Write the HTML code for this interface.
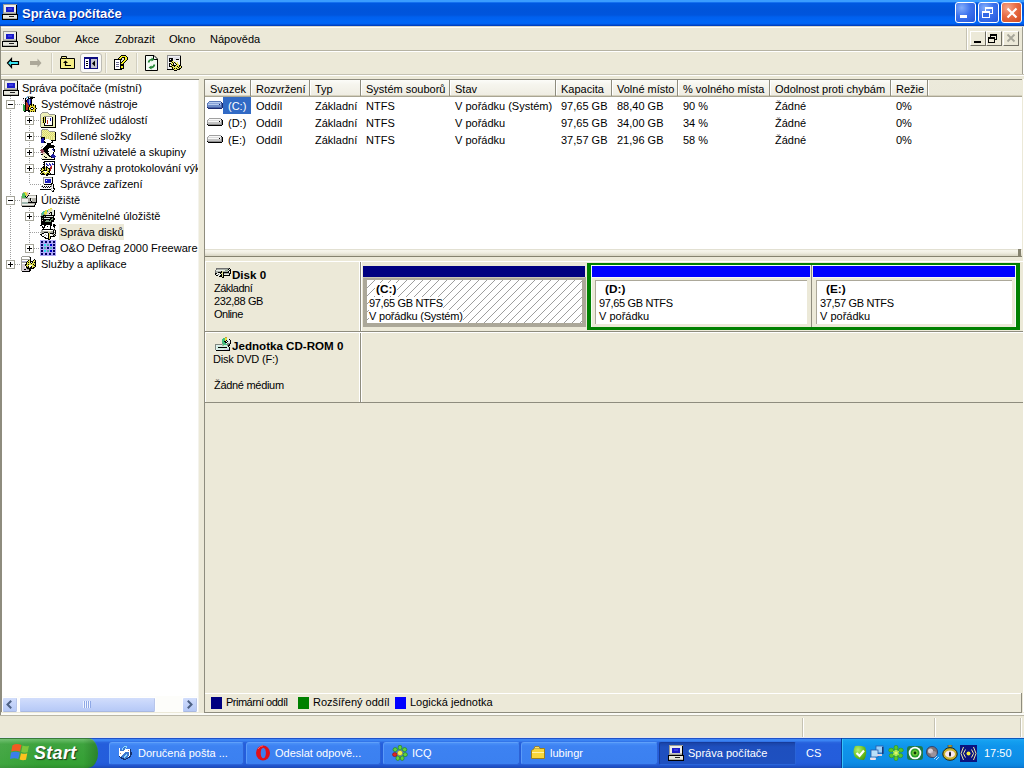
<!DOCTYPE html><html><head><meta charset="utf-8"><style>
*{margin:0;padding:0;box-sizing:border-box}
html,body{width:1024px;height:768px;overflow:hidden;background:#ECE9D8;font-family:"Liberation Sans",sans-serif;font-size:11px;color:#000}
.a{position:absolute}
.t{position:absolute;white-space:nowrap;line-height:13px}
svg{display:block}
</style></head><body>
<div class="a" style="left:0;top:0;width:1024px;height:26px;background:linear-gradient(#3A9CFF 0px,#3A9CFF 1.5px,#1470F0 2.5px,#0058E0 3.5px,#0054DA 9px,#0055DD 15px,#0060EE 17px,#0066F6 22px,#0062F2 24px,#0044C4 25px,#003CB8 26px)"></div>
<div class="a" style="left:2px;top:4px"><svg width="16" height="16" shape-rendering="crispEdges"><rect x="1" y="0" width="14" height="10" fill="#9C9C94"/><rect x="2" y="1" width="12" height="8" fill="#EEEEEA"/><rect x="14" y="1" width="1" height="9" fill="#000"/><rect x="2" y="8" width="12" height="1" fill="#C4C4BC"/><rect x="4" y="3" width="8" height="5" fill="#1C1CC8"/><rect x="6" y="4" width="4" height="2" fill="#3A3AE0"/><rect x="0" y="10" width="16" height="6" fill="#000"/><rect x="1" y="11" width="14" height="4" fill="#E6E6DE"/><rect x="1" y="14" width="14" height="1" fill="#B4B4AC"/><rect x="7" y="12" width="5" height="1" fill="#222"/></svg></div>
<div class="t" style="left:22px;top:6px;color:#fff;font-weight:bold;font-size:13px;line-height:15px;text-shadow:1px 1px 0 #0A1E8C">Správa počítače</div>
<div class="a" style="left:955px;top:2px;width:21px;height:21px;border:1px solid #fff;border-radius:3px;background:radial-gradient(circle at 30% 25%,#85AEFB 0,#3D73EE 45%,#2456DA 100%)"><div class="a" style="left:4px;top:12px;width:7px;height:3px;background:#fff"></div></div>
<div class="a" style="left:978px;top:2px;width:21px;height:21px;border:1px solid #fff;border-radius:3px;background:radial-gradient(circle at 30% 25%,#85AEFB 0,#3D73EE 45%,#2456DA 100%)"><div class="a" style="left:6px;top:4px;width:8px;height:7px;border:1px solid #fff;border-top-width:2px"></div><div class="a" style="left:3px;top:8px;width:8px;height:7px;border:1px solid #fff;border-top-width:2px;background:#3468E6"></div></div>
<div class="a" style="left:1001px;top:2px;width:21px;height:21px;border:1px solid #fff;border-radius:3px;background:radial-gradient(circle at 30% 25%,#F6A58A 0,#E86C44 45%,#D04A1E 100%)"><svg class="a" style="left:4px;top:4px" width="12" height="12"><path d="M1.5 1.5L10.5 10.5M10.5 1.5L1.5 10.5" stroke="#fff" stroke-width="2.2"/></svg></div>
<div class="a" style="left:0;top:26px;width:1024px;height:50px;background:#ECE9D8"></div>
<div class="a" style="left:0;top:26px;width:1024px;height:1px;background:#D8D6C8"></div>
<div class="a" style="left:0;top:27px;width:1024px;height:1px;background:#FDFDF8"></div>
<div class="a" style="left:0;top:50px;width:1024px;height:1px;background:#B6B3A3"></div>
<div class="a" style="left:0;top:51px;width:1024px;height:1px;background:#FFFFFF"></div>
<div class="a" style="left:0;top:26px;width:1px;height:50px;background:#ACA899"></div>
<div class="a" style="left:2px;top:31px"><svg width="16" height="16" shape-rendering="crispEdges"><rect x="1" y="0" width="14" height="10" fill="#9C9C94"/><rect x="2" y="1" width="12" height="8" fill="#EEEEEA"/><rect x="14" y="1" width="1" height="9" fill="#000"/><rect x="2" y="8" width="12" height="1" fill="#C4C4BC"/><rect x="4" y="3" width="8" height="5" fill="#1C1CC8"/><rect x="6" y="4" width="4" height="2" fill="#3A3AE0"/><rect x="0" y="10" width="16" height="6" fill="#000"/><rect x="1" y="11" width="14" height="4" fill="#E6E6DE"/><rect x="1" y="14" width="14" height="1" fill="#B4B4AC"/><rect x="7" y="12" width="5" height="1" fill="#222"/></svg></div>
<div class="t" style="left:25px;top:33px">Soubor</div>
<div class="t" style="left:75px;top:33px">Akce</div>
<div class="t" style="left:115px;top:33px">Zobrazit</div>
<div class="t" style="left:169px;top:33px">Okno</div>
<div class="t" style="left:210px;top:33px">Nápověda</div>
<div class="a" style="left:966px;top:28px;width:1px;height:22px;background:#C5C2B2"></div><div class="a" style="left:967px;top:28px;width:1px;height:22px;background:#fff"></div>
<div class="a" style="left:970px;top:31px;width:16px;height:15px;background:#ECE9D8;border:1px solid;border-color:#fff #716F64 #716F64 #fff"><div class="a" style="left:3px;top:9px;width:7px;height:2px;background:#000"></div></div>
<div class="a" style="left:986px;top:31px;width:16px;height:15px;background:#ECE9D8;border:1px solid;border-color:#fff #716F64 #716F64 #fff"><div class="a" style="left:3px;top:2px;width:7px;height:6px;border:1px solid #000;border-top-width:2px"></div><div class="a" style="left:1px;top:5px;width:7px;height:6px;border:1px solid #000;border-top-width:2px;background:#ECE9D8"></div></div>
<div class="a" style="left:1003px;top:31px;width:16px;height:15px;background:#ECE9D8;border:1px solid;border-color:#fff #716F64 #716F64 #fff"><svg class="a" style="left:2px;top:1px" width="10" height="10"><path d="M1.5 1.5L8.5 8.5M8.5 1.5L1.5 8.5" stroke="#A7A69A" stroke-width="1.8"/></svg></div>
<div class="a" style="left:1022px;top:27px;width:1px;height:49px;background:#A09E90"></div>
<div class="a" style="left:1023px;top:27px;width:1px;height:49px;background:#FFFFFF"></div>
<div class="a" style="left:0;top:74px;width:1024px;height:1px;background:#C5C2B2"></div>
<div class="a" style="left:0;top:75px;width:1024px;height:1px;background:#FFFFFF"></div>
<div class="a" style="left:80px;top:53px;width:22px;height:20px;background:#FAFAF8;border:1px solid #BDBCB4;border-radius:3px"></div>
<svg class="a" style="left:0;top:52px" width="200" height="24" viewBox="0 0 200 24">
<path d="M7.5 11L11.5 6.5V9.5H18.5V12.5H11.5V15.5Z" fill="#3AE4F2" stroke="#000" stroke-width="1.2" stroke-linejoin="miter"/>
<path d="M41.5 11L37.5 6.5V9H30V13H37.5V15.5Z" fill="#ACA899"/>
<g shape-rendering="crispEdges">
<rect x="51" y="1" width="1" height="20" fill="#D2CFC0"/><rect x="52" y="1" width="1" height="20" fill="#F8F8F2"/>
<rect x="105" y="1" width="1" height="20" fill="#D2CFC0"/><rect x="106" y="1" width="1" height="20" fill="#F8F8F2"/>
<rect x="136" y="1" width="1" height="20" fill="#D2CFC0"/><rect x="137" y="1" width="1" height="20" fill="#F8F8F2"/>
</g>
<path d="M60.5 6.5H68.5V16.5H60.5Z" fill="#F6EE86"/>
<path d="M60.5 16.5V6.5H61.5V4.5H66.5V6.5H74.5V16.5Z" fill="#F6EE86" stroke="#000"/>
<path d="M61.5 6.5H66.5" stroke="#000"/>
<path d="M63 11L65.5 8.5L68 11Z" fill="#000"/><path d="M65.5 10V13.5H71" fill="none" stroke="#000" stroke-width="1.2"/>
<g shape-rendering="crispEdges">
<rect x="84" y="5" width="14" height="12" fill="#0C0C80"/>
<rect x="85" y="7" width="4" height="9" fill="#fff"/>
<rect x="91" y="7" width="6" height="9" fill="#C4C4D0"/>
<rect x="86" y="9" width="2" height="1" fill="#000"/><rect x="86" y="11" width="2" height="1" fill="#000"/><rect x="86" y="13" width="2" height="1" fill="#000"/>
</g>
<path d="M95 8.5V14.5L92 11.5Z" fill="#000"/>
<path d="M145.5 3.5H154L157.5 7V18.5H145.5Z" fill="#F4FAF4" stroke="#000"/>
<path d="M153.5 3.5V7.5H157.5" fill="none" stroke="#000"/>
<path d="M148.5 10.5Q149 7.5 152.5 7.5" fill="none" stroke="#2A8A3A" stroke-width="1.6"/><path d="M151.5 5.5L154.5 7.5L151.5 9.5Z" fill="#2A8A3A"/>
<path d="M154.5 12.5Q154 15.5 150.5 15.5" fill="none" stroke="#2A8A3A" stroke-width="1.6"/><path d="M151.5 13.5L148.5 15.5L151.5 17.5Z" fill="#2A8A3A"/>
</svg>
<div class="a" style="left:113px;top:54px"><svg width="16" height="16" shape-rendering="crispEdges"><rect x="8" y="1" width="5" height="1" fill="#000000"/><rect x="7" y="2" width="1" height="1" fill="#000000"/><rect x="8" y="2" width="5" height="1" fill="#F4F020"/><rect x="13" y="2" width="1" height="1" fill="#000000"/><rect x="6" y="3" width="1" height="1" fill="#000000"/><rect x="7" y="3" width="2" height="1" fill="#F4F020"/><rect x="9" y="3" width="3" height="1" fill="#000000"/><rect x="12" y="3" width="2" height="1" fill="#F4F020"/><rect x="14" y="3" width="1" height="1" fill="#000000"/><rect x="5" y="4" width="1" height="1" fill="#000000"/><rect x="6" y="4" width="2" height="1" fill="#F4F020"/><rect x="8" y="4" width="1" height="1" fill="#000000"/><rect x="11" y="4" width="1" height="1" fill="#000000"/><rect x="12" y="4" width="2" height="1" fill="#F4F020"/><rect x="14" y="4" width="1" height="1" fill="#000000"/><rect x="1" y="5" width="8" height="1" fill="#000000"/><rect x="11" y="5" width="1" height="1" fill="#000000"/><rect x="12" y="5" width="2" height="1" fill="#F4F020"/><rect x="14" y="5" width="1" height="1" fill="#000000"/><rect x="1" y="6" width="1" height="1" fill="#000000"/><rect x="2" y="6" width="5" height="1" fill="#FFFFFF"/><rect x="7" y="6" width="1" height="1" fill="#000000"/><rect x="10" y="6" width="1" height="1" fill="#000000"/><rect x="11" y="6" width="2" height="1" fill="#F4F020"/><rect x="13" y="6" width="1" height="1" fill="#000000"/><rect x="1" y="7" width="1" height="1" fill="#000000"/><rect x="2" y="7" width="5" height="1" fill="#FFFFFF"/><rect x="7" y="7" width="1" height="1" fill="#000000"/><rect x="9" y="7" width="1" height="1" fill="#000000"/><rect x="10" y="7" width="2" height="1" fill="#F4F020"/><rect x="12" y="7" width="1" height="1" fill="#000000"/><rect x="1" y="8" width="1" height="1" fill="#000000"/><rect x="2" y="8" width="1" height="1" fill="#FFFFFF"/><rect x="3" y="8" width="3" height="1" fill="#6A6A90"/><rect x="6" y="8" width="1" height="1" fill="#FFFFFF"/><rect x="7" y="8" width="2" height="1" fill="#000000"/><rect x="9" y="8" width="2" height="1" fill="#F4F020"/><rect x="11" y="8" width="1" height="1" fill="#000000"/><rect x="1" y="9" width="1" height="1" fill="#000000"/><rect x="2" y="9" width="5" height="1" fill="#FFFFFF"/><rect x="7" y="9" width="1" height="1" fill="#000000"/><rect x="8" y="9" width="2" height="1" fill="#F4F020"/><rect x="10" y="9" width="1" height="1" fill="#000000"/><rect x="1" y="10" width="1" height="1" fill="#000000"/><rect x="2" y="10" width="1" height="1" fill="#FFFFFF"/><rect x="3" y="10" width="3" height="1" fill="#6A6A90"/><rect x="6" y="10" width="1" height="1" fill="#FFFFFF"/><rect x="7" y="10" width="4" height="1" fill="#000000"/><rect x="1" y="11" width="1" height="1" fill="#000000"/><rect x="2" y="11" width="5" height="1" fill="#FFFFFF"/><rect x="7" y="11" width="4" height="1" fill="#000000"/><rect x="1" y="12" width="1" height="1" fill="#000000"/><rect x="2" y="12" width="1" height="1" fill="#FFFFFF"/><rect x="3" y="12" width="3" height="1" fill="#6A6A90"/><rect x="6" y="12" width="1" height="1" fill="#FFFFFF"/><rect x="7" y="12" width="1" height="1" fill="#000000"/><rect x="8" y="12" width="2" height="1" fill="#F4F020"/><rect x="10" y="12" width="1" height="1" fill="#000000"/><rect x="1" y="13" width="1" height="1" fill="#000000"/><rect x="2" y="13" width="5" height="1" fill="#FFFFFF"/><rect x="7" y="13" width="1" height="1" fill="#000000"/><rect x="8" y="13" width="2" height="1" fill="#F4F020"/><rect x="10" y="13" width="1" height="1" fill="#000000"/><rect x="1" y="14" width="1" height="1" fill="#000000"/><rect x="2" y="14" width="5" height="1" fill="#FFFFFF"/><rect x="7" y="14" width="4" height="1" fill="#000000"/><rect x="1" y="15" width="8" height="1" fill="#000000"/></svg></div>
<div class="a" style="left:166px;top:55px"><svg width="17" height="16" shape-rendering="crispEdges"><rect x="1" y="0" width="14" height="1" fill="#909090"/><rect x="1" y="1" width="1" height="1" fill="#909090"/><rect x="2" y="1" width="12" height="1" fill="#F0F0F4"/><rect x="14" y="1" width="1" height="1" fill="#000000"/><rect x="1" y="2" width="1" height="1" fill="#909090"/><rect x="2" y="2" width="1" height="1" fill="#F0F0F4"/><rect x="3" y="2" width="11" height="1" fill="#E0E0E8"/><rect x="14" y="2" width="1" height="1" fill="#000000"/><rect x="1" y="3" width="1" height="1" fill="#909090"/><rect x="2" y="3" width="1" height="1" fill="#F0F0F4"/><rect x="3" y="3" width="4" height="1" fill="#000000"/><rect x="7" y="3" width="1" height="1" fill="#F0F0F4"/><rect x="8" y="3" width="6" height="1" fill="#E0E0E8"/><rect x="14" y="3" width="1" height="1" fill="#000000"/><rect x="1" y="4" width="1" height="1" fill="#909090"/><rect x="2" y="4" width="1" height="1" fill="#F0F0F4"/><rect x="3" y="4" width="1" height="1" fill="#000000"/><rect x="4" y="4" width="1" height="1" fill="#F0F0F4"/><rect x="5" y="4" width="2" height="1" fill="#000000"/><rect x="7" y="4" width="1" height="1" fill="#F0F0F4"/><rect x="8" y="4" width="2" height="1" fill="#E0E0E8"/><rect x="10" y="4" width="3" height="1" fill="#000000"/><rect x="13" y="4" width="1" height="1" fill="#F0F0F4"/><rect x="14" y="4" width="1" height="1" fill="#000000"/><rect x="1" y="5" width="1" height="1" fill="#909090"/><rect x="2" y="5" width="1" height="1" fill="#F0F0F4"/><rect x="3" y="5" width="4" height="1" fill="#000000"/><rect x="7" y="5" width="7" height="1" fill="#F0F0F4"/><rect x="14" y="5" width="1" height="1" fill="#000000"/><rect x="1" y="6" width="1" height="1" fill="#909090"/><rect x="2" y="6" width="1" height="1" fill="#F0F0F4"/><rect x="3" y="6" width="3" height="1" fill="#000000"/><rect x="6" y="6" width="2" height="1" fill="#E8E860"/><rect x="8" y="6" width="1" height="1" fill="#F0F0F4"/><rect x="9" y="6" width="2" height="1" fill="#E0E0E8"/><rect x="11" y="6" width="3" height="1" fill="#F0F0F4"/><rect x="14" y="6" width="1" height="1" fill="#000000"/><rect x="1" y="7" width="1" height="1" fill="#909090"/><rect x="2" y="7" width="3" height="1" fill="#F0F0F4"/><rect x="5" y="7" width="1" height="1" fill="#E8E860"/><rect x="6" y="7" width="1" height="1" fill="#000000"/><rect x="7" y="7" width="1" height="1" fill="#E8E860"/><rect x="8" y="7" width="1" height="1" fill="#000000"/><rect x="9" y="7" width="1" height="1" fill="#E8E860"/><rect x="10" y="7" width="1" height="1" fill="#F0F0F4"/><rect x="11" y="7" width="1" height="1" fill="#E8E860"/><rect x="12" y="7" width="2" height="1" fill="#F0F0F4"/><rect x="14" y="7" width="1" height="1" fill="#000000"/><rect x="1" y="8" width="1" height="1" fill="#909090"/><rect x="2" y="8" width="1" height="1" fill="#F0F0F4"/><rect x="3" y="8" width="2" height="1" fill="#000000"/><rect x="5" y="8" width="2" height="1" fill="#E8E860"/><rect x="7" y="8" width="1" height="1" fill="#000000"/><rect x="8" y="8" width="1" height="1" fill="#F0F0F4"/><rect x="9" y="8" width="1" height="1" fill="#000000"/><rect x="10" y="8" width="2" height="1" fill="#E8E860"/><rect x="12" y="8" width="2" height="1" fill="#F0F0F4"/><rect x="14" y="8" width="1" height="1" fill="#000000"/><rect x="1" y="9" width="1" height="1" fill="#909090"/><rect x="2" y="9" width="1" height="1" fill="#F0F0F4"/><rect x="3" y="9" width="1" height="1" fill="#000000"/><rect x="4" y="9" width="1" height="1" fill="#F0F0F4"/><rect x="5" y="9" width="1" height="1" fill="#000000"/><rect x="6" y="9" width="1" height="1" fill="#E8E860"/><rect x="7" y="9" width="1" height="1" fill="#000000"/><rect x="8" y="9" width="2" height="1" fill="#F0F0F4"/><rect x="10" y="9" width="1" height="1" fill="#000000"/><rect x="11" y="9" width="2" height="1" fill="#E8E860"/><rect x="13" y="9" width="1" height="1" fill="#F0F0F4"/><rect x="14" y="9" width="1" height="1" fill="#000000"/><rect x="1" y="10" width="1" height="1" fill="#909090"/><rect x="2" y="10" width="1" height="1" fill="#F0F0F4"/><rect x="3" y="10" width="1" height="1" fill="#000000"/><rect x="4" y="10" width="1" height="1" fill="#F0F0F4"/><rect x="5" y="10" width="1" height="1" fill="#E8E860"/><rect x="6" y="10" width="4" height="1" fill="#000000"/><rect x="10" y="10" width="3" height="1" fill="#E8E860"/><rect x="13" y="10" width="2" height="1" fill="#000000"/><rect x="1" y="11" width="1" height="1" fill="#909090"/><rect x="2" y="11" width="1" height="1" fill="#F0F0F4"/><rect x="3" y="11" width="3" height="1" fill="#000000"/><rect x="6" y="11" width="2" height="1" fill="#E8E860"/><rect x="8" y="11" width="1" height="1" fill="#000000"/><rect x="9" y="11" width="2" height="1" fill="#E8E860"/><rect x="11" y="11" width="1" height="1" fill="#000000"/><rect x="12" y="11" width="1" height="1" fill="#E8E860"/><rect x="13" y="11" width="1" height="1" fill="#000000"/><rect x="14" y="11" width="1" height="1" fill="#E8E860"/><rect x="15" y="11" width="1" height="1" fill="#000000"/><rect x="1" y="12" width="1" height="1" fill="#909090"/><rect x="2" y="12" width="3" height="1" fill="#F0F0F4"/><rect x="5" y="12" width="1" height="1" fill="#E8E860"/><rect x="6" y="12" width="1" height="1" fill="#000000"/><rect x="7" y="12" width="5" height="1" fill="#E8E860"/><rect x="12" y="12" width="1" height="1" fill="#000000"/><rect x="13" y="12" width="2" height="1" fill="#E8E860"/><rect x="15" y="12" width="1" height="1" fill="#000000"/><rect x="1" y="13" width="1" height="1" fill="#909090"/><rect x="2" y="13" width="4" height="1" fill="#F0F0F4"/><rect x="6" y="13" width="1" height="1" fill="#000000"/><rect x="7" y="13" width="1" height="1" fill="#E8E860"/><rect x="8" y="13" width="1" height="1" fill="#000000"/><rect x="9" y="13" width="1" height="1" fill="#E8E860"/><rect x="10" y="13" width="1" height="1" fill="#000000"/><rect x="11" y="13" width="2" height="1" fill="#E8E860"/><rect x="13" y="13" width="2" height="1" fill="#000000"/><rect x="1" y="14" width="7" height="1" fill="#000000"/><rect x="8" y="14" width="3" height="1" fill="#E8E860"/><rect x="11" y="14" width="3" height="1" fill="#000000"/><rect x="8" y="15" width="3" height="1" fill="#000000"/></svg></div>
<div class="a" style="left:0;top:76px;width:1024px;height:662px;background:#ECE9D8"></div>
<div class="a" style="left:0;top:26px;width:1px;height:690px;background:#8E8C7E"></div>
<div class="a" style="left:1px;top:79px;width:198px;height:634px;background:#fff;border-left:1px solid #8E8C7E;border-top:1px solid #8E8C7E"></div>
<div class="a" style="left:198px;top:80px;width:1px;height:633px;background:#F4F3EC"></div>
<div class="a" style="left:0;top:0;width:198px;height:696px;overflow:hidden">
<div class="a" style="left:10px;top:96px;width:1px;height:168px;background:repeating-linear-gradient(#A0A0A0 0 1px,transparent 1px 2px)"></div>
<div class="a" style="left:29px;top:112px;width:1px;height:72px;background:repeating-linear-gradient(#A0A0A0 0 1px,transparent 1px 2px)"></div>
<div class="a" style="left:29px;top:208px;width:1px;height:40px;background:repeating-linear-gradient(#A0A0A0 0 1px,transparent 1px 2px)"></div>
<div class="a" style="left:11px;top:104px;width:11px;height:1px;background:repeating-linear-gradient(90deg,#A0A0A0 0 1px,transparent 1px 2px)"></div>
<div class="a" style="left:6px;top:100px;width:9px;height:9px;border:1px solid #A5A59A;background:#fff"><div class="a" style="left:1px;top:3px;width:5px;height:1px;background:#000"></div></div>
<div class="a" style="left:30px;top:120px;width:11px;height:1px;background:repeating-linear-gradient(90deg,#A0A0A0 0 1px,transparent 1px 2px)"></div>
<div class="a" style="left:25px;top:116px;width:9px;height:9px;border:1px solid #A5A59A;background:#fff"><div class="a" style="left:1px;top:3px;width:5px;height:1px;background:#000"></div><div class="a" style="left:3px;top:1px;width:1px;height:5px;background:#000"></div></div>
<div class="a" style="left:30px;top:136px;width:11px;height:1px;background:repeating-linear-gradient(90deg,#A0A0A0 0 1px,transparent 1px 2px)"></div>
<div class="a" style="left:25px;top:132px;width:9px;height:9px;border:1px solid #A5A59A;background:#fff"><div class="a" style="left:1px;top:3px;width:5px;height:1px;background:#000"></div><div class="a" style="left:3px;top:1px;width:1px;height:5px;background:#000"></div></div>
<div class="a" style="left:30px;top:152px;width:11px;height:1px;background:repeating-linear-gradient(90deg,#A0A0A0 0 1px,transparent 1px 2px)"></div>
<div class="a" style="left:25px;top:148px;width:9px;height:9px;border:1px solid #A5A59A;background:#fff"><div class="a" style="left:1px;top:3px;width:5px;height:1px;background:#000"></div><div class="a" style="left:3px;top:1px;width:1px;height:5px;background:#000"></div></div>
<div class="a" style="left:30px;top:168px;width:11px;height:1px;background:repeating-linear-gradient(90deg,#A0A0A0 0 1px,transparent 1px 2px)"></div>
<div class="a" style="left:25px;top:164px;width:9px;height:9px;border:1px solid #A5A59A;background:#fff"><div class="a" style="left:1px;top:3px;width:5px;height:1px;background:#000"></div><div class="a" style="left:3px;top:1px;width:1px;height:5px;background:#000"></div></div>
<div class="a" style="left:30px;top:184px;width:11px;height:1px;background:repeating-linear-gradient(90deg,#A0A0A0 0 1px,transparent 1px 2px)"></div>
<div class="a" style="left:11px;top:200px;width:11px;height:1px;background:repeating-linear-gradient(90deg,#A0A0A0 0 1px,transparent 1px 2px)"></div>
<div class="a" style="left:6px;top:196px;width:9px;height:9px;border:1px solid #A5A59A;background:#fff"><div class="a" style="left:1px;top:3px;width:5px;height:1px;background:#000"></div></div>
<div class="a" style="left:30px;top:216px;width:11px;height:1px;background:repeating-linear-gradient(90deg,#A0A0A0 0 1px,transparent 1px 2px)"></div>
<div class="a" style="left:25px;top:212px;width:9px;height:9px;border:1px solid #A5A59A;background:#fff"><div class="a" style="left:1px;top:3px;width:5px;height:1px;background:#000"></div><div class="a" style="left:3px;top:1px;width:1px;height:5px;background:#000"></div></div>
<div class="a" style="left:30px;top:232px;width:11px;height:1px;background:repeating-linear-gradient(90deg,#A0A0A0 0 1px,transparent 1px 2px)"></div>
<div class="a" style="left:30px;top:248px;width:11px;height:1px;background:repeating-linear-gradient(90deg,#A0A0A0 0 1px,transparent 1px 2px)"></div>
<div class="a" style="left:25px;top:244px;width:9px;height:9px;border:1px solid #A5A59A;background:#fff"><div class="a" style="left:1px;top:3px;width:5px;height:1px;background:#000"></div><div class="a" style="left:3px;top:1px;width:1px;height:5px;background:#000"></div></div>
<div class="a" style="left:11px;top:264px;width:11px;height:1px;background:repeating-linear-gradient(90deg,#A0A0A0 0 1px,transparent 1px 2px)"></div>
<div class="a" style="left:6px;top:260px;width:9px;height:9px;border:1px solid #A5A59A;background:#fff"><div class="a" style="left:1px;top:3px;width:5px;height:1px;background:#000"></div><div class="a" style="left:3px;top:1px;width:1px;height:5px;background:#000"></div></div>
<div class="t" style="left:22px;top:81px;line-height:14px">Správa počítače (místní)</div>
<div class="t" style="left:41px;top:97px;line-height:14px">Systémové nástroje</div>
<div class="t" style="left:60px;top:113px;line-height:14px">Prohlížeč událostí</div>
<div class="t" style="left:60px;top:129px;line-height:14px">Sdílené složky</div>
<div class="t" style="left:60px;top:145px;line-height:14px">Místní uživatelé a skupiny</div>
<div class="t" style="left:60px;top:161px;line-height:14px">Výstrahy a protokolování výkonu</div>
<div class="t" style="left:60px;top:177px;line-height:14px">Správce zařízení</div>
<div class="t" style="left:41px;top:193px;line-height:14px">Úložiště</div>
<div class="t" style="left:60px;top:209px;line-height:14px">Vyměnitelné úložiště</div>
<div class="a" style="left:59px;top:224px;width:65px;height:16px;background:#ECE9D8"></div>
<div class="t" style="left:60px;top:225px;line-height:14px">Správa disků</div>
<div class="t" style="left:60px;top:241px;line-height:14px">O&amp;O Defrag 2000 Freeware</div>
<div class="t" style="left:41px;top:257px;line-height:14px">Služby a aplikace</div>
<div class="a" style="left:3px;top:80px"><svg width="16" height="16" shape-rendering="crispEdges"><rect x="1" y="0" width="14" height="10" fill="#9C9C94"/><rect x="2" y="1" width="12" height="8" fill="#EEEEEA"/><rect x="14" y="1" width="1" height="9" fill="#000"/><rect x="2" y="8" width="12" height="1" fill="#C4C4BC"/><rect x="4" y="3" width="8" height="5" fill="#1C1CC8"/><rect x="6" y="4" width="4" height="2" fill="#3A3AE0"/><rect x="0" y="10" width="16" height="6" fill="#000"/><rect x="1" y="11" width="14" height="4" fill="#E6E6DE"/><rect x="1" y="14" width="14" height="1" fill="#B4B4AC"/><rect x="7" y="12" width="5" height="1" fill="#222"/></svg></div>
<div class="a" style="left:21px;top:96px"><svg width="16" height="16" shape-rendering="crispEdges"><rect x="6" y="0" width="1" height="1" fill="#80B8E0"/><rect x="7" y="0" width="5" height="1" fill="#9C9C94"/><rect x="5" y="1" width="2" height="1" fill="#80B8E0"/><rect x="7" y="1" width="1" height="1" fill="#000000"/><rect x="9" y="1" width="5" height="1" fill="#000000"/><rect x="2" y="2" width="1" height="1" fill="#000000"/><rect x="3" y="2" width="1" height="1" fill="#FFFFFF"/><rect x="4" y="2" width="1" height="1" fill="#000000"/><rect x="5" y="2" width="1" height="1" fill="#80B8E0"/><rect x="6" y="2" width="1" height="1" fill="#FFFFFF"/><rect x="7" y="2" width="5" height="1" fill="#000000"/><rect x="1" y="3" width="1" height="1" fill="#FFFFFF"/><rect x="2" y="3" width="1" height="1" fill="#E8C8D8"/><rect x="3" y="3" width="1" height="1" fill="#FFFFFF"/><rect x="4" y="3" width="1" height="1" fill="#000000"/><rect x="5" y="3" width="1" height="1" fill="#FFFFFF"/><rect x="6" y="3" width="1" height="1" fill="#000000"/><rect x="7" y="3" width="1" height="1" fill="#1A1AB0"/><rect x="8" y="3" width="1" height="1" fill="#80B8E0"/><rect x="9" y="3" width="1" height="1" fill="#1A1AB0"/><rect x="10" y="3" width="1" height="1" fill="#000000"/><rect x="1" y="4" width="1" height="1" fill="#E8C8D8"/><rect x="2" y="4" width="1" height="1" fill="#FFFFFF"/><rect x="3" y="4" width="1" height="1" fill="#E8C8D8"/><rect x="4" y="4" width="2" height="1" fill="#000000"/><rect x="6" y="4" width="2" height="1" fill="#1A1AB0"/><rect x="8" y="4" width="1" height="1" fill="#80B8E0"/><rect x="9" y="4" width="1" height="1" fill="#1A1AB0"/><rect x="10" y="4" width="1" height="1" fill="#000000"/><rect x="2" y="5" width="1" height="1" fill="#FFFFFF"/><rect x="3" y="5" width="1" height="1" fill="#E8C8D8"/><rect x="4" y="5" width="2" height="1" fill="#000000"/><rect x="6" y="5" width="2" height="1" fill="#1A1AB0"/><rect x="8" y="5" width="1" height="1" fill="#80B8E0"/><rect x="9" y="5" width="1" height="1" fill="#1A1AB0"/><rect x="10" y="5" width="1" height="1" fill="#000000"/><rect x="2" y="6" width="1" height="1" fill="#E8C8D8"/><rect x="3" y="6" width="1" height="1" fill="#FFFFFF"/><rect x="4" y="6" width="1" height="1" fill="#000000"/><rect x="5" y="6" width="1" height="1" fill="#B83020"/><rect x="6" y="6" width="2" height="1" fill="#1A1AB0"/><rect x="8" y="6" width="1" height="1" fill="#80B8E0"/><rect x="9" y="6" width="1" height="1" fill="#1A1AB0"/><rect x="10" y="6" width="1" height="1" fill="#000000"/><rect x="2" y="7" width="1" height="1" fill="#FFFFFF"/><rect x="3" y="7" width="1" height="1" fill="#E8C8D8"/><rect x="4" y="7" width="1" height="1" fill="#000000"/><rect x="5" y="7" width="2" height="1" fill="#B83020"/><rect x="7" y="7" width="1" height="1" fill="#1A1AB0"/><rect x="8" y="7" width="1" height="1" fill="#80B8E0"/><rect x="9" y="7" width="1" height="1" fill="#1A1AB0"/><rect x="10" y="7" width="1" height="1" fill="#000000"/><rect x="2" y="8" width="1" height="1" fill="#30A040"/><rect x="3" y="8" width="1" height="1" fill="#FFFFFF"/><rect x="4" y="8" width="1" height="1" fill="#000000"/><rect x="5" y="8" width="2" height="1" fill="#B83020"/><rect x="7" y="8" width="2" height="1" fill="#1A1AB0"/><rect x="9" y="8" width="2" height="1" fill="#000000"/><rect x="11" y="8" width="1" height="1" fill="#E6D83A"/><rect x="12" y="8" width="1" height="1" fill="#000000"/><rect x="2" y="9" width="2" height="1" fill="#30A040"/><rect x="4" y="9" width="1" height="1" fill="#000000"/><rect x="5" y="9" width="3" height="1" fill="#B83020"/><rect x="8" y="9" width="1" height="1" fill="#000000"/><rect x="9" y="9" width="1" height="1" fill="#E6D83A"/><rect x="10" y="9" width="1" height="1" fill="#000000"/><rect x="11" y="9" width="1" height="1" fill="#E6D83A"/><rect x="12" y="9" width="1" height="1" fill="#000000"/><rect x="13" y="9" width="1" height="1" fill="#E6D83A"/><rect x="14" y="9" width="1" height="1" fill="#000000"/><rect x="2" y="10" width="2" height="1" fill="#30A040"/><rect x="4" y="10" width="1" height="1" fill="#000000"/><rect x="5" y="10" width="3" height="1" fill="#B83020"/><rect x="8" y="10" width="1" height="1" fill="#000000"/><rect x="9" y="10" width="5" height="1" fill="#E6D83A"/><rect x="14" y="10" width="1" height="1" fill="#000000"/><rect x="2" y="11" width="2" height="1" fill="#30A040"/><rect x="4" y="11" width="1" height="1" fill="#000000"/><rect x="5" y="11" width="2" height="1" fill="#B83020"/><rect x="7" y="11" width="1" height="1" fill="#000000"/><rect x="8" y="11" width="2" height="1" fill="#E6D83A"/><rect x="10" y="11" width="2" height="1" fill="#000000"/><rect x="12" y="11" width="2" height="1" fill="#E6D83A"/><rect x="14" y="11" width="1" height="1" fill="#000000"/><rect x="2" y="12" width="2" height="1" fill="#30A040"/><rect x="4" y="12" width="1" height="1" fill="#000000"/><rect x="5" y="12" width="2" height="1" fill="#B83020"/><rect x="7" y="12" width="1" height="1" fill="#000000"/><rect x="8" y="12" width="1" height="1" fill="#E6D83A"/><rect x="9" y="12" width="1" height="1" fill="#000000"/><rect x="10" y="12" width="2" height="1" fill="#FFFFFF"/><rect x="12" y="12" width="1" height="1" fill="#000000"/><rect x="13" y="12" width="2" height="1" fill="#E6D83A"/><rect x="15" y="12" width="1" height="1" fill="#000000"/><rect x="2" y="13" width="2" height="1" fill="#30A040"/><rect x="4" y="13" width="1" height="1" fill="#000000"/><rect x="5" y="13" width="2" height="1" fill="#B83020"/><rect x="7" y="13" width="1" height="1" fill="#000000"/><rect x="8" y="13" width="2" height="1" fill="#E6D83A"/><rect x="10" y="13" width="2" height="1" fill="#000000"/><rect x="12" y="13" width="2" height="1" fill="#E6D83A"/><rect x="14" y="13" width="1" height="1" fill="#000000"/><rect x="2" y="14" width="2" height="1" fill="#30A040"/><rect x="4" y="14" width="5" height="1" fill="#000000"/><rect x="9" y="14" width="5" height="1" fill="#E6D83A"/><rect x="14" y="14" width="1" height="1" fill="#000000"/><rect x="3" y="15" width="2" height="1" fill="#000000"/><rect x="7" y="15" width="2" height="1" fill="#000000"/><rect x="9" y="15" width="1" height="1" fill="#E6D83A"/><rect x="10" y="15" width="1" height="1" fill="#000000"/><rect x="11" y="15" width="1" height="1" fill="#E6D83A"/><rect x="12" y="15" width="1" height="1" fill="#000000"/><rect x="13" y="15" width="1" height="1" fill="#E6D83A"/><rect x="14" y="15" width="1" height="1" fill="#000000"/></svg></div>
<div class="a" style="left:40px;top:112px"><svg width="16" height="16" shape-rendering="crispEdges"><rect x="2" y="0" width="6" height="1" fill="#9C9C94"/><rect x="1" y="1" width="1" height="1" fill="#9C9C94"/><rect x="2" y="1" width="6" height="1" fill="#EEF0B8"/><rect x="8" y="1" width="1" height="1" fill="#9C9C94"/><rect x="0" y="2" width="1" height="1" fill="#9C9C94"/><rect x="1" y="2" width="8" height="1" fill="#EEF0B8"/><rect x="9" y="2" width="6" height="1" fill="#9C9C94"/><rect x="0" y="3" width="1" height="1" fill="#9C9C94"/><rect x="1" y="3" width="14" height="1" fill="#EEF0B8"/><rect x="15" y="3" width="1" height="1" fill="#000000"/><rect x="0" y="4" width="1" height="1" fill="#9C9C94"/><rect x="1" y="4" width="3" height="1" fill="#EEF0B8"/><rect x="4" y="4" width="8" height="1" fill="#9C9C94"/><rect x="12" y="4" width="3" height="1" fill="#EEF0B8"/><rect x="15" y="4" width="1" height="1" fill="#000000"/><rect x="0" y="5" width="1" height="1" fill="#9C9C94"/><rect x="1" y="5" width="2" height="1" fill="#EEF0B8"/><rect x="3" y="5" width="1" height="1" fill="#000000"/><rect x="4" y="5" width="1" height="1" fill="#E8E050"/><rect x="5" y="5" width="1" height="1" fill="#000000"/><rect x="6" y="5" width="6" height="1" fill="#FFFFFF"/><rect x="12" y="5" width="1" height="1" fill="#000000"/><rect x="13" y="5" width="2" height="1" fill="#EEF0B8"/><rect x="15" y="5" width="1" height="1" fill="#000000"/><rect x="0" y="6" width="1" height="1" fill="#9C9C94"/><rect x="1" y="6" width="1" height="1" fill="#EEF0B8"/><rect x="2" y="6" width="1" height="1" fill="#E8E050"/><rect x="3" y="6" width="1" height="1" fill="#000000"/><rect x="4" y="6" width="1" height="1" fill="#E8E050"/><rect x="5" y="6" width="1" height="1" fill="#000000"/><rect x="6" y="6" width="1" height="1" fill="#FFFFFF"/><rect x="7" y="6" width="2" height="1" fill="#E8C8D8"/><rect x="9" y="6" width="1" height="1" fill="#FFFFFF"/><rect x="10" y="6" width="1" height="1" fill="#1A1AB0"/><rect x="11" y="6" width="1" height="1" fill="#FFFFFF"/><rect x="12" y="6" width="1" height="1" fill="#000000"/><rect x="13" y="6" width="2" height="1" fill="#EEF0B8"/><rect x="15" y="6" width="1" height="1" fill="#000000"/><rect x="0" y="7" width="1" height="1" fill="#9C9C94"/><rect x="1" y="7" width="2" height="1" fill="#EEF0B8"/><rect x="3" y="7" width="1" height="1" fill="#000000"/><rect x="4" y="7" width="1" height="1" fill="#E8E050"/><rect x="5" y="7" width="1" height="1" fill="#000000"/><rect x="6" y="7" width="4" height="1" fill="#FFFFFF"/><rect x="10" y="7" width="1" height="1" fill="#1A1AB0"/><rect x="11" y="7" width="1" height="1" fill="#FFFFFF"/><rect x="12" y="7" width="1" height="1" fill="#000000"/><rect x="13" y="7" width="2" height="1" fill="#EEF0B8"/><rect x="15" y="7" width="1" height="1" fill="#000000"/><rect x="0" y="8" width="1" height="1" fill="#9C9C94"/><rect x="1" y="8" width="1" height="1" fill="#EEF0B8"/><rect x="2" y="8" width="1" height="1" fill="#E8E050"/><rect x="3" y="8" width="1" height="1" fill="#000000"/><rect x="4" y="8" width="1" height="1" fill="#E8E050"/><rect x="5" y="8" width="1" height="1" fill="#000000"/><rect x="6" y="8" width="1" height="1" fill="#FFFFFF"/><rect x="7" y="8" width="1" height="1" fill="#B83020"/><rect x="8" y="8" width="2" height="1" fill="#FFFFFF"/><rect x="10" y="8" width="1" height="1" fill="#1A1AB0"/><rect x="11" y="8" width="1" height="1" fill="#FFFFFF"/><rect x="12" y="8" width="1" height="1" fill="#000000"/><rect x="13" y="8" width="2" height="1" fill="#EEF0B8"/><rect x="15" y="8" width="1" height="1" fill="#000000"/><rect x="0" y="9" width="1" height="1" fill="#9C9C94"/><rect x="1" y="9" width="2" height="1" fill="#EEF0B8"/><rect x="3" y="9" width="1" height="1" fill="#000000"/><rect x="4" y="9" width="1" height="1" fill="#E8E050"/><rect x="5" y="9" width="1" height="1" fill="#000000"/><rect x="6" y="9" width="1" height="1" fill="#FFFFFF"/><rect x="7" y="9" width="1" height="1" fill="#B83020"/><rect x="8" y="9" width="4" height="1" fill="#FFFFFF"/><rect x="12" y="9" width="1" height="1" fill="#000000"/><rect x="13" y="9" width="2" height="1" fill="#EEF0B8"/><rect x="15" y="9" width="1" height="1" fill="#000000"/><rect x="0" y="10" width="1" height="1" fill="#9C9C94"/><rect x="1" y="10" width="1" height="1" fill="#EEF0B8"/><rect x="2" y="10" width="1" height="1" fill="#E8E050"/><rect x="3" y="10" width="1" height="1" fill="#000000"/><rect x="4" y="10" width="1" height="1" fill="#E8E050"/><rect x="5" y="10" width="1" height="1" fill="#000000"/><rect x="6" y="10" width="1" height="1" fill="#FFFFFF"/><rect x="7" y="10" width="1" height="1" fill="#B83020"/><rect x="8" y="10" width="4" height="1" fill="#FFFFFF"/><rect x="12" y="10" width="1" height="1" fill="#000000"/><rect x="13" y="10" width="2" height="1" fill="#EEF0B8"/><rect x="15" y="10" width="1" height="1" fill="#000000"/><rect x="0" y="11" width="1" height="1" fill="#9C9C94"/><rect x="1" y="11" width="3" height="1" fill="#EEF0B8"/><rect x="4" y="11" width="1" height="1" fill="#000000"/><rect x="5" y="11" width="2" height="1" fill="#FFFFFF"/><rect x="7" y="11" width="1" height="1" fill="#B83020"/><rect x="8" y="11" width="4" height="1" fill="#FFFFFF"/><rect x="12" y="11" width="1" height="1" fill="#000000"/><rect x="13" y="11" width="2" height="1" fill="#EEF0B8"/><rect x="15" y="11" width="1" height="1" fill="#000000"/><rect x="0" y="12" width="1" height="1" fill="#9C9C94"/><rect x="1" y="12" width="3" height="1" fill="#EEF0B8"/><rect x="4" y="12" width="1" height="1" fill="#000000"/><rect x="5" y="12" width="7" height="1" fill="#FFFFFF"/><rect x="12" y="12" width="1" height="1" fill="#000000"/><rect x="13" y="12" width="2" height="1" fill="#EEF0B8"/><rect x="15" y="12" width="1" height="1" fill="#000000"/><rect x="0" y="13" width="1" height="1" fill="#9C9C94"/><rect x="1" y="13" width="3" height="1" fill="#EEF0B8"/><rect x="4" y="13" width="9" height="1" fill="#000000"/><rect x="13" y="13" width="2" height="1" fill="#EEF0B8"/><rect x="15" y="13" width="1" height="1" fill="#000000"/><rect x="0" y="14" width="1" height="1" fill="#9C9C94"/><rect x="1" y="14" width="14" height="1" fill="#EEF0B8"/><rect x="15" y="14" width="1" height="1" fill="#000000"/><rect x="1" y="15" width="15" height="1" fill="#000000"/></svg></div>
<div class="a" style="left:40px;top:128px"><svg width="16" height="16" shape-rendering="crispEdges"><rect x="2" y="1" width="6" height="1" fill="#9C9C94"/><rect x="1" y="2" width="1" height="1" fill="#9C9C94"/><rect x="2" y="2" width="1" height="1" fill="#D8D870"/><rect x="3" y="2" width="1" height="1" fill="#F2F2A0"/><rect x="4" y="2" width="1" height="1" fill="#D8D870"/><rect x="5" y="2" width="1" height="1" fill="#F2F2A0"/><rect x="6" y="2" width="1" height="1" fill="#D8D870"/><rect x="7" y="2" width="1" height="1" fill="#F2F2A0"/><rect x="8" y="2" width="1" height="1" fill="#9C9C94"/><rect x="1" y="3" width="1" height="1" fill="#9C9C94"/><rect x="2" y="3" width="1" height="1" fill="#F2F2A0"/><rect x="3" y="3" width="1" height="1" fill="#D8D870"/><rect x="4" y="3" width="1" height="1" fill="#F2F2A0"/><rect x="5" y="3" width="1" height="1" fill="#D8D870"/><rect x="6" y="3" width="1" height="1" fill="#F2F2A0"/><rect x="7" y="3" width="1" height="1" fill="#D8D870"/><rect x="8" y="3" width="1" height="1" fill="#F2F2A0"/><rect x="9" y="3" width="6" height="1" fill="#9C9C94"/><rect x="1" y="4" width="1" height="1" fill="#9C9C94"/><rect x="2" y="4" width="1" height="1" fill="#D8D870"/><rect x="3" y="4" width="1" height="1" fill="#F2F2A0"/><rect x="4" y="4" width="1" height="1" fill="#D8D870"/><rect x="5" y="4" width="1" height="1" fill="#F2F2A0"/><rect x="6" y="4" width="1" height="1" fill="#D8D870"/><rect x="7" y="4" width="1" height="1" fill="#F2F2A0"/><rect x="8" y="4" width="1" height="1" fill="#D8D870"/><rect x="9" y="4" width="1" height="1" fill="#F2F2A0"/><rect x="10" y="4" width="1" height="1" fill="#D8D870"/><rect x="11" y="4" width="1" height="1" fill="#F2F2A0"/><rect x="12" y="4" width="1" height="1" fill="#D8D870"/><rect x="13" y="4" width="1" height="1" fill="#F2F2A0"/><rect x="14" y="4" width="1" height="1" fill="#D8D870"/><rect x="15" y="4" width="1" height="1" fill="#000000"/><rect x="1" y="5" width="1" height="1" fill="#9C9C94"/><rect x="2" y="5" width="1" height="1" fill="#F2F2A0"/><rect x="3" y="5" width="1" height="1" fill="#D8D870"/><rect x="4" y="5" width="1" height="1" fill="#F2F2A0"/><rect x="5" y="5" width="1" height="1" fill="#D8D870"/><rect x="6" y="5" width="1" height="1" fill="#F2F2A0"/><rect x="7" y="5" width="1" height="1" fill="#D8D870"/><rect x="8" y="5" width="1" height="1" fill="#F2F2A0"/><rect x="9" y="5" width="1" height="1" fill="#D8D870"/><rect x="10" y="5" width="1" height="1" fill="#F2F2A0"/><rect x="11" y="5" width="1" height="1" fill="#D8D870"/><rect x="12" y="5" width="1" height="1" fill="#F2F2A0"/><rect x="13" y="5" width="1" height="1" fill="#D8D870"/><rect x="14" y="5" width="1" height="1" fill="#F2F2A0"/><rect x="15" y="5" width="1" height="1" fill="#000000"/><rect x="1" y="6" width="1" height="1" fill="#9C9C94"/><rect x="2" y="6" width="1" height="1" fill="#D8D870"/><rect x="3" y="6" width="1" height="1" fill="#F2F2A0"/><rect x="4" y="6" width="1" height="1" fill="#D8D870"/><rect x="5" y="6" width="1" height="1" fill="#F2F2A0"/><rect x="6" y="6" width="1" height="1" fill="#D8D870"/><rect x="7" y="6" width="1" height="1" fill="#F2F2A0"/><rect x="8" y="6" width="1" height="1" fill="#D8D870"/><rect x="9" y="6" width="1" height="1" fill="#F2F2A0"/><rect x="10" y="6" width="1" height="1" fill="#D8D870"/><rect x="11" y="6" width="1" height="1" fill="#F2F2A0"/><rect x="12" y="6" width="1" height="1" fill="#D8D870"/><rect x="13" y="6" width="1" height="1" fill="#F2F2A0"/><rect x="14" y="6" width="1" height="1" fill="#D8D870"/><rect x="15" y="6" width="1" height="1" fill="#000000"/><rect x="1" y="7" width="1" height="1" fill="#9C9C94"/><rect x="2" y="7" width="1" height="1" fill="#F2F2A0"/><rect x="3" y="7" width="1" height="1" fill="#D8D870"/><rect x="4" y="7" width="1" height="1" fill="#F2F2A0"/><rect x="5" y="7" width="1" height="1" fill="#D8D870"/><rect x="6" y="7" width="1" height="1" fill="#F2F2A0"/><rect x="7" y="7" width="1" height="1" fill="#D8D870"/><rect x="8" y="7" width="1" height="1" fill="#F2F2A0"/><rect x="9" y="7" width="1" height="1" fill="#D8D870"/><rect x="10" y="7" width="1" height="1" fill="#F2F2A0"/><rect x="11" y="7" width="1" height="1" fill="#D8D870"/><rect x="12" y="7" width="1" height="1" fill="#F2F2A0"/><rect x="13" y="7" width="1" height="1" fill="#D8D870"/><rect x="14" y="7" width="1" height="1" fill="#F2F2A0"/><rect x="15" y="7" width="1" height="1" fill="#000000"/><rect x="1" y="8" width="1" height="1" fill="#9C9C94"/><rect x="2" y="8" width="1" height="1" fill="#D8D870"/><rect x="3" y="8" width="1" height="1" fill="#F2F2A0"/><rect x="4" y="8" width="1" height="1" fill="#D8D870"/><rect x="5" y="8" width="1" height="1" fill="#F2F2A0"/><rect x="6" y="8" width="1" height="1" fill="#D8D870"/><rect x="7" y="8" width="1" height="1" fill="#F2F2A0"/><rect x="8" y="8" width="1" height="1" fill="#D8D870"/><rect x="9" y="8" width="1" height="1" fill="#F2F2A0"/><rect x="10" y="8" width="1" height="1" fill="#D8D870"/><rect x="11" y="8" width="1" height="1" fill="#F2F2A0"/><rect x="12" y="8" width="1" height="1" fill="#D8D870"/><rect x="13" y="8" width="1" height="1" fill="#F2F2A0"/><rect x="14" y="8" width="1" height="1" fill="#D8D870"/><rect x="15" y="8" width="1" height="1" fill="#000000"/><rect x="1" y="9" width="4" height="1" fill="#000000"/><rect x="5" y="9" width="1" height="1" fill="#F2F2A0"/><rect x="6" y="9" width="1" height="1" fill="#D8D870"/><rect x="7" y="9" width="1" height="1" fill="#F2F2A0"/><rect x="8" y="9" width="1" height="1" fill="#D8D870"/><rect x="9" y="9" width="1" height="1" fill="#F2F2A0"/><rect x="10" y="9" width="1" height="1" fill="#D8D870"/><rect x="11" y="9" width="1" height="1" fill="#F2F2A0"/><rect x="12" y="9" width="1" height="1" fill="#D8D870"/><rect x="13" y="9" width="2" height="1" fill="#F2F2A0"/><rect x="15" y="9" width="1" height="1" fill="#000000"/><rect x="1" y="10" width="1" height="1" fill="#000000"/><rect x="2" y="10" width="2" height="1" fill="#1A1AB0"/><rect x="4" y="10" width="1" height="1" fill="#000000"/><rect x="5" y="10" width="1" height="1" fill="#F2F2A0"/><rect x="6" y="10" width="1" height="1" fill="#D8D870"/><rect x="7" y="10" width="1" height="1" fill="#F2F2A0"/><rect x="8" y="10" width="1" height="1" fill="#D8D870"/><rect x="9" y="10" width="1" height="1" fill="#F2F2A0"/><rect x="10" y="10" width="1" height="1" fill="#D8D870"/><rect x="11" y="10" width="1" height="1" fill="#F2F2A0"/><rect x="12" y="10" width="1" height="1" fill="#D8D870"/><rect x="13" y="10" width="2" height="1" fill="#F2F2A0"/><rect x="15" y="10" width="1" height="1" fill="#000000"/><rect x="1" y="11" width="3" height="1" fill="#1A1AB0"/><rect x="4" y="11" width="1" height="1" fill="#000000"/><rect x="5" y="11" width="4" height="1" fill="#FFFFFF"/><rect x="9" y="11" width="1" height="1" fill="#F2F2A0"/><rect x="10" y="11" width="1" height="1" fill="#D8D870"/><rect x="11" y="11" width="1" height="1" fill="#F2F2A0"/><rect x="12" y="11" width="1" height="1" fill="#D8D870"/><rect x="13" y="11" width="2" height="1" fill="#F2F2A0"/><rect x="15" y="11" width="1" height="1" fill="#000000"/><rect x="1" y="12" width="3" height="1" fill="#1A1AB0"/><rect x="4" y="12" width="7" height="1" fill="#FFFFFF"/><rect x="11" y="12" width="5" height="1" fill="#000000"/><rect x="1" y="13" width="3" height="1" fill="#1A1AB0"/><rect x="4" y="13" width="1" height="1" fill="#000000"/><rect x="5" y="13" width="7" height="1" fill="#FFFFFF"/><rect x="12" y="13" width="1" height="1" fill="#000000"/><rect x="1" y="14" width="3" height="1" fill="#1A1AB0"/><rect x="4" y="14" width="2" height="1" fill="#000000"/><rect x="6" y="14" width="5" height="1" fill="#FFFFFF"/><rect x="11" y="14" width="2" height="1" fill="#000000"/><rect x="7" y="15" width="4" height="1" fill="#000000"/></svg></div>
<div class="a" style="left:40px;top:144px"><svg width="16" height="16" shape-rendering="crispEdges"><rect x="7" y="0" width="4" height="1" fill="#000000"/><rect x="6" y="1" width="8" height="1" fill="#000000"/><rect x="2" y="2" width="1" height="1" fill="#9C9C94"/><rect x="3" y="2" width="2" height="1" fill="#FFFFFF"/><rect x="5" y="2" width="10" height="1" fill="#000000"/><rect x="1" y="3" width="1" height="1" fill="#9C9C94"/><rect x="2" y="3" width="2" height="1" fill="#FFFFFF"/><rect x="4" y="3" width="10" height="1" fill="#000000"/><rect x="1" y="4" width="2" height="1" fill="#FFFFFF"/><rect x="3" y="4" width="6" height="1" fill="#000000"/><rect x="9" y="4" width="4" height="1" fill="#FFFFFF"/><rect x="13" y="4" width="1" height="1" fill="#000000"/><rect x="1" y="5" width="2" height="1" fill="#904050"/><rect x="3" y="5" width="5" height="1" fill="#000000"/><rect x="8" y="5" width="4" height="1" fill="#FFFFFF"/><rect x="12" y="5" width="2" height="1" fill="#2020A0"/><rect x="14" y="5" width="1" height="1" fill="#000000"/><rect x="0" y="6" width="4" height="1" fill="#904050"/><rect x="4" y="6" width="4" height="1" fill="#000000"/><rect x="8" y="6" width="5" height="1" fill="#FFFFFF"/><rect x="13" y="6" width="1" height="1" fill="#2020A0"/><rect x="14" y="6" width="1" height="1" fill="#000000"/><rect x="1" y="7" width="3" height="1" fill="#904050"/><rect x="4" y="7" width="5" height="1" fill="#000000"/><rect x="9" y="7" width="5" height="1" fill="#FFFFFF"/><rect x="14" y="7" width="1" height="1" fill="#000000"/><rect x="1" y="8" width="2" height="1" fill="#904050"/><rect x="3" y="8" width="2" height="1" fill="#D8B8A8"/><rect x="5" y="8" width="3" height="1" fill="#000000"/><rect x="8" y="8" width="5" height="1" fill="#FFFFFF"/><rect x="13" y="8" width="1" height="1" fill="#000000"/><rect x="2" y="9" width="3" height="1" fill="#D8B8A8"/><rect x="5" y="9" width="1" height="1" fill="#F0F0C8"/><rect x="6" y="9" width="3" height="1" fill="#000000"/><rect x="9" y="9" width="4" height="1" fill="#FFFFFF"/><rect x="13" y="9" width="1" height="1" fill="#000000"/><rect x="1" y="10" width="2" height="1" fill="#000000"/><rect x="3" y="10" width="4" height="1" fill="#F0F0C8"/><rect x="7" y="10" width="2" height="1" fill="#000000"/><rect x="9" y="10" width="3" height="1" fill="#FFFFFF"/><rect x="12" y="10" width="2" height="1" fill="#2020A0"/><rect x="1" y="11" width="1" height="1" fill="#FFFFFF"/><rect x="2" y="11" width="6" height="1" fill="#F0F0C8"/><rect x="8" y="11" width="2" height="1" fill="#000000"/><rect x="10" y="11" width="1" height="1" fill="#FFFFFF"/><rect x="11" y="11" width="4" height="1" fill="#2020A0"/><rect x="1" y="12" width="1" height="1" fill="#FFFFFF"/><rect x="2" y="12" width="2" height="1" fill="#F0F0C8"/><rect x="4" y="12" width="1" height="1" fill="#000000"/><rect x="5" y="12" width="4" height="1" fill="#F0F0C8"/><rect x="9" y="12" width="2" height="1" fill="#000000"/><rect x="11" y="12" width="5" height="1" fill="#2020A0"/><rect x="1" y="13" width="1" height="1" fill="#FFFFFF"/><rect x="2" y="13" width="3" height="1" fill="#F0F0C8"/><rect x="5" y="13" width="2" height="1" fill="#000000"/><rect x="7" y="13" width="4" height="1" fill="#F0F0C8"/><rect x="11" y="13" width="1" height="1" fill="#000000"/><rect x="12" y="13" width="3" height="1" fill="#2020A0"/><rect x="1" y="14" width="1" height="1" fill="#9C9C94"/><rect x="2" y="14" width="1" height="1" fill="#FFFFFF"/><rect x="3" y="14" width="9" height="1" fill="#F0F0C8"/><rect x="12" y="14" width="2" height="1" fill="#FFFFFF"/><rect x="14" y="14" width="1" height="1" fill="#000000"/><rect x="2" y="15" width="13" height="1" fill="#000000"/></svg></div>
<div class="a" style="left:40px;top:160px"><svg width="16" height="16" shape-rendering="crispEdges"><rect x="4" y="1" width="11" height="1" fill="#000000"/><rect x="3" y="2" width="2" height="1" fill="#000000"/><rect x="5" y="2" width="9" height="1" fill="#FFFFFF"/><rect x="14" y="2" width="1" height="1" fill="#000000"/><rect x="4" y="3" width="1" height="1" fill="#000000"/><rect x="5" y="3" width="1" height="1" fill="#FFFFFF"/><rect x="6" y="3" width="1" height="1" fill="#2A2AB0"/><rect x="7" y="3" width="2" height="1" fill="#FFFFFF"/><rect x="9" y="3" width="1" height="1" fill="#2A2AB0"/><rect x="10" y="3" width="2" height="1" fill="#FFFFFF"/><rect x="12" y="3" width="1" height="1" fill="#2A2AB0"/><rect x="13" y="3" width="1" height="1" fill="#FFFFFF"/><rect x="14" y="3" width="1" height="1" fill="#000000"/><rect x="3" y="4" width="2" height="1" fill="#000000"/><rect x="5" y="4" width="1" height="1" fill="#FFFFFF"/><rect x="6" y="4" width="2" height="1" fill="#2A2AB0"/><rect x="8" y="4" width="1" height="1" fill="#FFFFFF"/><rect x="9" y="4" width="2" height="1" fill="#2A2AB0"/><rect x="11" y="4" width="1" height="1" fill="#FFFFFF"/><rect x="12" y="4" width="2" height="1" fill="#2A2AB0"/><rect x="14" y="4" width="1" height="1" fill="#000000"/><rect x="4" y="5" width="1" height="1" fill="#000000"/><rect x="5" y="5" width="2" height="1" fill="#FFFFFF"/><rect x="7" y="5" width="2" height="1" fill="#2A2AB0"/><rect x="9" y="5" width="1" height="1" fill="#FFFFFF"/><rect x="10" y="5" width="1" height="1" fill="#2A2AB0"/><rect x="11" y="5" width="1" height="1" fill="#E0A0D0"/><rect x="12" y="5" width="2" height="1" fill="#FFFFFF"/><rect x="14" y="5" width="1" height="1" fill="#000000"/><rect x="3" y="6" width="2" height="1" fill="#000000"/><rect x="5" y="6" width="1" height="1" fill="#FFFFFF"/><rect x="6" y="6" width="1" height="1" fill="#000000"/><rect x="7" y="6" width="3" height="1" fill="#FFFFFF"/><rect x="10" y="6" width="1" height="1" fill="#E0A0D0"/><rect x="11" y="6" width="1" height="1" fill="#B02020"/><rect x="12" y="6" width="2" height="1" fill="#FFFFFF"/><rect x="14" y="6" width="1" height="1" fill="#000000"/><rect x="2" y="7" width="3" height="1" fill="#000000"/><rect x="5" y="7" width="1" height="1" fill="#E0E048"/><rect x="6" y="7" width="2" height="1" fill="#000000"/><rect x="8" y="7" width="2" height="1" fill="#FFFFFF"/><rect x="10" y="7" width="2" height="1" fill="#B02020"/><rect x="12" y="7" width="2" height="1" fill="#FFFFFF"/><rect x="14" y="7" width="1" height="1" fill="#000000"/><rect x="1" y="8" width="1" height="1" fill="#000000"/><rect x="2" y="8" width="1" height="1" fill="#E0E048"/><rect x="3" y="8" width="2" height="1" fill="#000000"/><rect x="5" y="8" width="1" height="1" fill="#E0E048"/><rect x="6" y="8" width="1" height="1" fill="#000000"/><rect x="7" y="8" width="1" height="1" fill="#E0E048"/><rect x="8" y="8" width="2" height="1" fill="#000000"/><rect x="10" y="8" width="2" height="1" fill="#B02020"/><rect x="12" y="8" width="2" height="1" fill="#FFFFFF"/><rect x="14" y="8" width="1" height="1" fill="#000000"/><rect x="1" y="9" width="1" height="1" fill="#000000"/><rect x="2" y="9" width="2" height="1" fill="#E0E048"/><rect x="4" y="9" width="1" height="1" fill="#000000"/><rect x="5" y="9" width="1" height="1" fill="#E0E048"/><rect x="6" y="9" width="1" height="1" fill="#000000"/><rect x="7" y="9" width="2" height="1" fill="#E0E048"/><rect x="9" y="9" width="1" height="1" fill="#000000"/><rect x="10" y="9" width="1" height="1" fill="#B02020"/><rect x="11" y="9" width="3" height="1" fill="#FFFFFF"/><rect x="14" y="9" width="1" height="1" fill="#000000"/><rect x="0" y="10" width="1" height="1" fill="#000000"/><rect x="1" y="10" width="2" height="1" fill="#E0E048"/><rect x="3" y="10" width="4" height="1" fill="#000000"/><rect x="7" y="10" width="2" height="1" fill="#E0E048"/><rect x="9" y="10" width="1" height="1" fill="#000000"/><rect x="10" y="10" width="1" height="1" fill="#B02020"/><rect x="11" y="10" width="3" height="1" fill="#FFFFFF"/><rect x="14" y="10" width="1" height="1" fill="#000000"/><rect x="1" y="11" width="2" height="1" fill="#000000"/><rect x="3" y="11" width="1" height="1" fill="#E0E048"/><rect x="4" y="11" width="3" height="1" fill="#FFFFFF"/><rect x="7" y="11" width="1" height="1" fill="#E0E048"/><rect x="8" y="11" width="2" height="1" fill="#000000"/><rect x="10" y="11" width="4" height="1" fill="#FFFFFF"/><rect x="14" y="11" width="1" height="1" fill="#000000"/><rect x="1" y="12" width="1" height="1" fill="#000000"/><rect x="2" y="12" width="3" height="1" fill="#E0E048"/><rect x="5" y="12" width="1" height="1" fill="#FFFFFF"/><rect x="6" y="12" width="3" height="1" fill="#E0E048"/><rect x="9" y="12" width="1" height="1" fill="#000000"/><rect x="10" y="12" width="4" height="1" fill="#FFFFFF"/><rect x="14" y="12" width="1" height="1" fill="#000000"/><rect x="0" y="13" width="1" height="1" fill="#000000"/><rect x="1" y="13" width="1" height="1" fill="#E0E048"/><rect x="2" y="13" width="2" height="1" fill="#000000"/><rect x="4" y="13" width="3" height="1" fill="#E0E048"/><rect x="7" y="13" width="2" height="1" fill="#000000"/><rect x="9" y="13" width="1" height="1" fill="#E0E048"/><rect x="10" y="13" width="1" height="1" fill="#000000"/><rect x="11" y="13" width="3" height="1" fill="#FFFFFF"/><rect x="14" y="13" width="1" height="1" fill="#000000"/><rect x="1" y="14" width="4" height="1" fill="#000000"/><rect x="5" y="14" width="1" height="1" fill="#E0E048"/><rect x="6" y="14" width="9" height="1" fill="#000000"/><rect x="6" y="15" width="2" height="1" fill="#000000"/></svg></div>
<div class="a" style="left:40px;top:176px"><svg width="16" height="16" shape-rendering="crispEdges"><rect x="3" y="1" width="9" height="1" fill="#9C9C94"/><rect x="12" y="1" width="1" height="1" fill="#000000"/><rect x="3" y="2" width="1" height="1" fill="#9C9C94"/><rect x="4" y="2" width="8" height="1" fill="#F4F4F8"/><rect x="12" y="2" width="1" height="1" fill="#000000"/><rect x="3" y="3" width="1" height="1" fill="#9C9C94"/><rect x="4" y="3" width="1" height="1" fill="#F4F4F8"/><rect x="5" y="3" width="6" height="1" fill="#1C1CC0"/><rect x="11" y="3" width="1" height="1" fill="#F4F4F8"/><rect x="12" y="3" width="1" height="1" fill="#000000"/><rect x="3" y="4" width="1" height="1" fill="#9C9C94"/><rect x="4" y="4" width="1" height="1" fill="#F4F4F8"/><rect x="5" y="4" width="1" height="1" fill="#1C1CC0"/><rect x="6" y="4" width="1" height="1" fill="#F4F4F8"/><rect x="7" y="4" width="4" height="1" fill="#1C1CC0"/><rect x="11" y="4" width="1" height="1" fill="#F4F4F8"/><rect x="12" y="4" width="1" height="1" fill="#000000"/><rect x="3" y="5" width="1" height="1" fill="#9C9C94"/><rect x="4" y="5" width="1" height="1" fill="#F4F4F8"/><rect x="5" y="5" width="6" height="1" fill="#1C1CC0"/><rect x="11" y="5" width="1" height="1" fill="#F4F4F8"/><rect x="12" y="5" width="1" height="1" fill="#000000"/><rect x="3" y="6" width="1" height="1" fill="#9C9C94"/><rect x="4" y="6" width="1" height="1" fill="#F4F4F8"/><rect x="5" y="6" width="6" height="1" fill="#1C1CC0"/><rect x="11" y="6" width="1" height="1" fill="#F4F4F8"/><rect x="12" y="6" width="1" height="1" fill="#000000"/><rect x="3" y="7" width="1" height="1" fill="#9C9C94"/><rect x="4" y="7" width="7" height="1" fill="#F4F4F8"/><rect x="11" y="7" width="2" height="1" fill="#000000"/><rect x="4" y="8" width="8" height="1" fill="#000000"/><rect x="12" y="8" width="1" height="1" fill="#F4F4F8"/><rect x="13" y="8" width="1" height="1" fill="#000000"/><rect x="2" y="9" width="1" height="1" fill="#9C9C94"/><rect x="3" y="9" width="8" height="1" fill="#F4F4F8"/><rect x="11" y="9" width="1" height="1" fill="#9C9C94"/><rect x="12" y="9" width="1" height="1" fill="#F4F4F8"/><rect x="13" y="9" width="1" height="1" fill="#000000"/><rect x="1" y="10" width="1" height="1" fill="#9C9C94"/><rect x="2" y="10" width="1" height="1" fill="#000000"/><rect x="3" y="10" width="1" height="1" fill="#F4F4F8"/><rect x="4" y="10" width="1" height="1" fill="#000000"/><rect x="5" y="10" width="1" height="1" fill="#F4F4F8"/><rect x="6" y="10" width="1" height="1" fill="#000000"/><rect x="7" y="10" width="1" height="1" fill="#F4F4F8"/><rect x="8" y="10" width="1" height="1" fill="#000000"/><rect x="9" y="10" width="1" height="1" fill="#F4F4F8"/><rect x="10" y="10" width="1" height="1" fill="#000000"/><rect x="11" y="10" width="1" height="1" fill="#9C9C94"/><rect x="12" y="10" width="1" height="1" fill="#F4F4F8"/><rect x="13" y="10" width="1" height="1" fill="#000000"/><rect x="1" y="11" width="2" height="1" fill="#F4F4F8"/><rect x="3" y="11" width="1" height="1" fill="#000000"/><rect x="4" y="11" width="1" height="1" fill="#F4F4F8"/><rect x="5" y="11" width="1" height="1" fill="#000000"/><rect x="6" y="11" width="1" height="1" fill="#F4F4F8"/><rect x="7" y="11" width="1" height="1" fill="#000000"/><rect x="8" y="11" width="1" height="1" fill="#F4F4F8"/><rect x="9" y="11" width="1" height="1" fill="#000000"/><rect x="10" y="11" width="3" height="1" fill="#F4F4F8"/><rect x="13" y="11" width="1" height="1" fill="#000000"/><rect x="0" y="12" width="11" height="1" fill="#F4F4F8"/><rect x="11" y="12" width="1" height="1" fill="#9C9C94"/><rect x="12" y="12" width="1" height="1" fill="#F4F4F8"/><rect x="13" y="12" width="2" height="1" fill="#000000"/><rect x="0" y="13" width="11" height="1" fill="#000000"/><rect x="11" y="13" width="3" height="1" fill="#F4F4F8"/><rect x="14" y="13" width="1" height="1" fill="#000000"/><rect x="11" y="14" width="1" height="1" fill="#9C9C94"/><rect x="12" y="14" width="1" height="1" fill="#F4F4F8"/><rect x="13" y="14" width="1" height="1" fill="#000000"/><rect x="12" y="15" width="2" height="1" fill="#000000"/></svg></div>
<div class="a" style="left:21px;top:192px"><svg width="16" height="16" shape-rendering="crispEdges"><rect x="2" y="0" width="1" height="1" fill="#B0B0A8"/><rect x="3" y="0" width="2" height="1" fill="#E6D83A"/><rect x="5" y="0" width="1" height="1" fill="#EEEEB0"/><rect x="6" y="0" width="1" height="1" fill="#E0C0B0"/><rect x="1" y="1" width="1" height="1" fill="#A0B8B0"/><rect x="2" y="1" width="2" height="1" fill="#50C060"/><rect x="4" y="1" width="2" height="1" fill="#E6D83A"/><rect x="6" y="1" width="2" height="1" fill="#E0C0B0"/><rect x="8" y="1" width="1" height="1" fill="#000000"/><rect x="1" y="2" width="3" height="1" fill="#50C060"/><rect x="4" y="2" width="2" height="1" fill="#E6D83A"/><rect x="6" y="2" width="2" height="1" fill="#E0C0B0"/><rect x="1" y="3" width="4" height="1" fill="#50C060"/><rect x="5" y="3" width="1" height="1" fill="#E6D83A"/><rect x="6" y="3" width="1" height="1" fill="#E0C0B0"/><rect x="7" y="3" width="1" height="1" fill="#000000"/><rect x="8" y="3" width="7" height="1" fill="#B0B0A8"/><rect x="15" y="3" width="1" height="1" fill="#000000"/><rect x="0" y="4" width="1" height="1" fill="#B0B0A8"/><rect x="1" y="4" width="3" height="1" fill="#50C060"/><rect x="4" y="4" width="1" height="1" fill="#000000"/><rect x="5" y="4" width="1" height="1" fill="#F0F0EC"/><rect x="6" y="4" width="1" height="1" fill="#000000"/><rect x="7" y="4" width="8" height="1" fill="#F0F0EC"/><rect x="15" y="4" width="1" height="1" fill="#000000"/><rect x="0" y="5" width="1" height="1" fill="#B0B0A8"/><rect x="1" y="5" width="4" height="1" fill="#50C060"/><rect x="5" y="5" width="1" height="1" fill="#000000"/><rect x="6" y="5" width="1" height="1" fill="#B0B0A8"/><rect x="7" y="5" width="8" height="1" fill="#F0F0EC"/><rect x="15" y="5" width="1" height="1" fill="#000000"/><rect x="0" y="6" width="9" height="1" fill="#B0B0A8"/><rect x="9" y="6" width="1" height="1" fill="#000000"/><rect x="10" y="6" width="5" height="1" fill="#B0B0A8"/><rect x="15" y="6" width="1" height="1" fill="#000000"/><rect x="0" y="7" width="1" height="1" fill="#B0B0A8"/><rect x="1" y="7" width="6" height="1" fill="#F0F0EC"/><rect x="7" y="7" width="2" height="1" fill="#B0B0A8"/><rect x="9" y="7" width="1" height="1" fill="#000000"/><rect x="10" y="7" width="1" height="1" fill="#F0F0EC"/><rect x="11" y="7" width="4" height="1" fill="#B0B0A8"/><rect x="15" y="7" width="1" height="1" fill="#000000"/><rect x="0" y="8" width="1" height="1" fill="#B0B0A8"/><rect x="1" y="8" width="6" height="1" fill="#F0F0EC"/><rect x="7" y="8" width="2" height="1" fill="#B0B0A8"/><rect x="9" y="8" width="1" height="1" fill="#000000"/><rect x="10" y="8" width="1" height="1" fill="#F0F0EC"/><rect x="11" y="8" width="4" height="1" fill="#B0B0A8"/><rect x="15" y="8" width="1" height="1" fill="#000000"/><rect x="0" y="9" width="1" height="1" fill="#B0B0A8"/><rect x="1" y="9" width="6" height="1" fill="#F0F0EC"/><rect x="7" y="9" width="3" height="1" fill="#B0B0A8"/><rect x="10" y="9" width="1" height="1" fill="#000000"/><rect x="11" y="9" width="4" height="1" fill="#B0B0A8"/><rect x="15" y="9" width="1" height="1" fill="#000000"/><rect x="0" y="10" width="1" height="1" fill="#B0B0A8"/><rect x="1" y="10" width="6" height="1" fill="#A0B8B0"/><rect x="7" y="10" width="9" height="1" fill="#000000"/><rect x="0" y="11" width="1" height="1" fill="#B0B0A8"/><rect x="1" y="11" width="6" height="1" fill="#A0B8B0"/><rect x="7" y="11" width="7" height="1" fill="#B0B0A8"/><rect x="14" y="11" width="1" height="1" fill="#000000"/><rect x="0" y="12" width="1" height="1" fill="#B0B0A8"/><rect x="1" y="12" width="12" height="1" fill="#F0F0EC"/><rect x="13" y="12" width="1" height="1" fill="#B0B0A8"/><rect x="14" y="12" width="1" height="1" fill="#000000"/><rect x="0" y="13" width="13" height="1" fill="#B0B0A8"/><rect x="13" y="13" width="1" height="1" fill="#000000"/><rect x="1" y="14" width="13" height="1" fill="#000000"/></svg></div>
<div class="a" style="left:40px;top:208px"><svg width="16" height="16" shape-rendering="crispEdges"><rect x="10" y="0" width="2" height="1" fill="#E0E040"/><rect x="8" y="1" width="2" height="1" fill="#E0E040"/><rect x="10" y="1" width="2" height="1" fill="#E0E0A0"/><rect x="12" y="1" width="1" height="1" fill="#E0E8E0"/><rect x="5" y="2" width="2" height="1" fill="#E0E040"/><rect x="7" y="2" width="1" height="1" fill="#40C0A0"/><rect x="8" y="2" width="4" height="1" fill="#E0E0A0"/><rect x="12" y="2" width="2" height="1" fill="#E0E8E0"/><rect x="14" y="2" width="1" height="1" fill="#000000"/><rect x="3" y="3" width="2" height="1" fill="#40C0A0"/><rect x="5" y="3" width="2" height="1" fill="#E0E040"/><rect x="7" y="3" width="1" height="1" fill="#40C0A0"/><rect x="8" y="3" width="1" height="1" fill="#E0D0D8"/><rect x="9" y="3" width="2" height="1" fill="#E0E0A0"/><rect x="11" y="3" width="3" height="1" fill="#E0E8E0"/><rect x="14" y="3" width="1" height="1" fill="#000000"/><rect x="2" y="4" width="2" height="1" fill="#40C0A0"/><rect x="4" y="4" width="3" height="1" fill="#E0E040"/><rect x="7" y="4" width="2" height="1" fill="#E0D0D8"/><rect x="9" y="4" width="1" height="1" fill="#E0E8E0"/><rect x="10" y="4" width="2" height="1" fill="#000000"/><rect x="12" y="4" width="2" height="1" fill="#E0E8E0"/><rect x="14" y="4" width="1" height="1" fill="#000000"/><rect x="1" y="5" width="1" height="1" fill="#80A080"/><rect x="2" y="5" width="2" height="1" fill="#40C0A0"/><rect x="4" y="5" width="3" height="1" fill="#E0E040"/><rect x="7" y="5" width="2" height="1" fill="#E0D0D8"/><rect x="9" y="5" width="1" height="1" fill="#000000"/><rect x="10" y="5" width="1" height="1" fill="#E0E8E0"/><rect x="11" y="5" width="1" height="1" fill="#000000"/><rect x="12" y="5" width="2" height="1" fill="#E0E8E0"/><rect x="14" y="5" width="1" height="1" fill="#000000"/><rect x="1" y="6" width="1" height="1" fill="#80A080"/><rect x="2" y="6" width="1" height="1" fill="#40C0A0"/><rect x="3" y="6" width="2" height="1" fill="#80A080"/><rect x="5" y="6" width="1" height="1" fill="#E0E040"/><rect x="6" y="6" width="1" height="1" fill="#E0D0D8"/><rect x="7" y="6" width="4" height="1" fill="#E0E8E0"/><rect x="11" y="6" width="1" height="1" fill="#000000"/><rect x="12" y="6" width="2" height="1" fill="#E0E8E0"/><rect x="14" y="6" width="1" height="1" fill="#000000"/><rect x="1" y="7" width="2" height="1" fill="#80A080"/><rect x="3" y="7" width="12" height="1" fill="#000000"/><rect x="1" y="8" width="3" height="1" fill="#000000"/><rect x="4" y="8" width="1" height="1" fill="#80A080"/><rect x="5" y="8" width="1" height="1" fill="#000000"/><rect x="6" y="8" width="7" height="1" fill="#E0E8E0"/><rect x="13" y="8" width="1" height="1" fill="#000000"/><rect x="1" y="9" width="13" height="1" fill="#000000"/><rect x="1" y="10" width="1" height="1" fill="#000000"/><rect x="2" y="10" width="1" height="1" fill="#80A080"/><rect x="3" y="10" width="1" height="1" fill="#000000"/><rect x="4" y="10" width="6" height="1" fill="#E0E8E0"/><rect x="10" y="10" width="2" height="1" fill="#000000"/><rect x="12" y="10" width="1" height="1" fill="#80A080"/><rect x="13" y="10" width="2" height="1" fill="#000000"/><rect x="1" y="11" width="10" height="1" fill="#000000"/><rect x="11" y="11" width="2" height="1" fill="#80A080"/><rect x="13" y="11" width="2" height="1" fill="#000000"/><rect x="1" y="12" width="1" height="1" fill="#000000"/><rect x="2" y="12" width="1" height="1" fill="#E0D0D8"/><rect x="3" y="12" width="3" height="1" fill="#000000"/><rect x="6" y="12" width="3" height="1" fill="#80A080"/><rect x="9" y="12" width="1" height="1" fill="#000000"/><rect x="10" y="12" width="1" height="1" fill="#80A080"/><rect x="11" y="12" width="3" height="1" fill="#000000"/><rect x="1" y="13" width="4" height="1" fill="#000000"/><rect x="5" y="13" width="6" height="1" fill="#80A080"/><rect x="11" y="13" width="3" height="1" fill="#000000"/><rect x="1" y="14" width="11" height="1" fill="#000000"/><rect x="1" y="15" width="11" height="1" fill="#000000"/></svg></div>
<div class="a" style="left:40px;top:224px"><svg width="16" height="16" shape-rendering="crispEdges"><rect x="1" y="0" width="11" height="1" fill="#000000"/><rect x="13" y="0" width="2" height="1" fill="#000000"/><rect x="0" y="1" width="2" height="1" fill="#000000"/><rect x="2" y="1" width="2" height="1" fill="#FFFFFF"/><rect x="4" y="1" width="2" height="1" fill="#000000"/><rect x="6" y="1" width="4" height="1" fill="#FFFFFF"/><rect x="10" y="1" width="2" height="1" fill="#000000"/><rect x="13" y="1" width="3" height="1" fill="#000000"/><rect x="2" y="2" width="1" height="1" fill="#000000"/><rect x="3" y="2" width="1" height="1" fill="#FFFFFF"/><rect x="4" y="2" width="1" height="1" fill="#000000"/><rect x="5" y="2" width="2" height="1" fill="#FFFFFF"/><rect x="7" y="2" width="1" height="1" fill="#000000"/><rect x="8" y="2" width="2" height="1" fill="#FFFFFF"/><rect x="10" y="2" width="1" height="1" fill="#000000"/><rect x="13" y="2" width="2" height="1" fill="#000000"/><rect x="2" y="3" width="3" height="1" fill="#000000"/><rect x="5" y="3" width="5" height="1" fill="#FFFFFF"/><rect x="10" y="3" width="1" height="1" fill="#000000"/><rect x="14" y="3" width="1" height="1" fill="#000000"/><rect x="3" y="4" width="1" height="1" fill="#000000"/><rect x="4" y="4" width="6" height="1" fill="#FFFFFF"/><rect x="10" y="4" width="1" height="1" fill="#000000"/><rect x="14" y="4" width="1" height="1" fill="#A8A8A0"/><rect x="2" y="5" width="11" height="1" fill="#000000"/><rect x="13" y="5" width="1" height="1" fill="#A8A8A0"/><rect x="14" y="5" width="1" height="1" fill="#000000"/><rect x="1" y="6" width="2" height="1" fill="#A8A8A0"/><rect x="3" y="6" width="10" height="1" fill="#FFFFFF"/><rect x="13" y="6" width="1" height="1" fill="#000000"/><rect x="14" y="6" width="1" height="1" fill="#A8A8A0"/><rect x="15" y="6" width="1" height="1" fill="#000000"/><rect x="1" y="7" width="7" height="1" fill="#A8A8A0"/><rect x="8" y="7" width="3" height="1" fill="#D8D8B0"/><rect x="11" y="7" width="2" height="1" fill="#A8A8A0"/><rect x="13" y="7" width="1" height="1" fill="#000000"/><rect x="14" y="7" width="1" height="1" fill="#FFFFFF"/><rect x="15" y="7" width="1" height="1" fill="#000000"/><rect x="1" y="8" width="3" height="1" fill="#A8A8A0"/><rect x="4" y="8" width="4" height="1" fill="#000000"/><rect x="8" y="8" width="1" height="1" fill="#D8D8B0"/><rect x="9" y="8" width="4" height="1" fill="#A8A8A0"/><rect x="13" y="8" width="1" height="1" fill="#000000"/><rect x="14" y="8" width="1" height="1" fill="#A8A8A0"/><rect x="15" y="8" width="1" height="1" fill="#000000"/><rect x="1" y="9" width="1" height="1" fill="#A8A8A0"/><rect x="2" y="9" width="2" height="1" fill="#000000"/><rect x="4" y="9" width="4" height="1" fill="#FFFFFF"/><rect x="8" y="9" width="1" height="1" fill="#000000"/><rect x="9" y="9" width="1" height="1" fill="#D8D060"/><rect x="10" y="9" width="4" height="1" fill="#000000"/><rect x="14" y="9" width="1" height="1" fill="#FFFFFF"/><rect x="15" y="9" width="1" height="1" fill="#000000"/><rect x="0" y="10" width="2" height="1" fill="#000000"/><rect x="2" y="10" width="3" height="1" fill="#FFFFFF"/><rect x="5" y="10" width="1" height="1" fill="#A8A8A0"/><rect x="6" y="10" width="2" height="1" fill="#FFFFFF"/><rect x="8" y="10" width="1" height="1" fill="#000000"/><rect x="9" y="10" width="1" height="1" fill="#D8D060"/><rect x="10" y="10" width="2" height="1" fill="#FFFFFF"/><rect x="12" y="10" width="2" height="1" fill="#A8A8A0"/><rect x="14" y="10" width="1" height="1" fill="#000000"/><rect x="15" y="10" width="1" height="1" fill="#A8A8A0"/><rect x="1" y="11" width="1" height="1" fill="#000000"/><rect x="2" y="11" width="2" height="1" fill="#FFFFFF"/><rect x="4" y="11" width="1" height="1" fill="#A8A8A0"/><rect x="5" y="11" width="1" height="1" fill="#FFFFFF"/><rect x="6" y="11" width="1" height="1" fill="#A8A8A0"/><rect x="7" y="11" width="1" height="1" fill="#FFFFFF"/><rect x="8" y="11" width="1" height="1" fill="#000000"/><rect x="9" y="11" width="1" height="1" fill="#D8D060"/><rect x="10" y="11" width="3" height="1" fill="#FFFFFF"/><rect x="13" y="11" width="1" height="1" fill="#000000"/><rect x="14" y="11" width="1" height="1" fill="#A8A8A0"/><rect x="15" y="11" width="1" height="1" fill="#000000"/><rect x="2" y="12" width="2" height="1" fill="#000000"/><rect x="4" y="12" width="4" height="1" fill="#FFFFFF"/><rect x="8" y="12" width="1" height="1" fill="#000000"/><rect x="9" y="12" width="1" height="1" fill="#D8D060"/><rect x="10" y="12" width="5" height="1" fill="#000000"/><rect x="4" y="13" width="2" height="1" fill="#000000"/><rect x="6" y="13" width="2" height="1" fill="#FFFFFF"/><rect x="8" y="13" width="1" height="1" fill="#000000"/><rect x="9" y="13" width="1" height="1" fill="#D8D060"/><rect x="10" y="13" width="1" height="1" fill="#000000"/><rect x="5" y="14" width="4" height="1" fill="#000000"/><rect x="9" y="14" width="1" height="1" fill="#D8D060"/><rect x="10" y="14" width="1" height="1" fill="#000000"/><rect x="8" y="15" width="2" height="1" fill="#000000"/></svg></div>
<div class="a" style="left:40px;top:240px"><svg width="16" height="16" shape-rendering="crispEdges"><rect x="0" y="0" width="16" height="1" fill="#B0A8F8"/><rect x="0" y="1" width="1" height="1" fill="#B0A8F8"/><rect x="1" y="1" width="2" height="1" fill="#000060"/><rect x="3" y="1" width="2" height="1" fill="#B0A8F8"/><rect x="5" y="1" width="2" height="1" fill="#000060"/><rect x="7" y="1" width="2" height="1" fill="#B0A8F8"/><rect x="9" y="1" width="2" height="1" fill="#000060"/><rect x="11" y="1" width="2" height="1" fill="#B0A8F8"/><rect x="13" y="1" width="2" height="1" fill="#000060"/><rect x="15" y="1" width="1" height="1" fill="#B0A8F8"/><rect x="0" y="2" width="1" height="1" fill="#B0A8F8"/><rect x="1" y="2" width="2" height="1" fill="#000060"/><rect x="3" y="2" width="2" height="1" fill="#B0A8F8"/><rect x="5" y="2" width="2" height="1" fill="#000060"/><rect x="7" y="2" width="2" height="1" fill="#B0A8F8"/><rect x="9" y="2" width="2" height="1" fill="#000060"/><rect x="11" y="2" width="2" height="1" fill="#B0A8F8"/><rect x="13" y="2" width="2" height="1" fill="#000060"/><rect x="15" y="2" width="1" height="1" fill="#B0A8F8"/><rect x="0" y="3" width="16" height="1" fill="#B0A8F8"/><rect x="0" y="4" width="1" height="1" fill="#B0A8F8"/><rect x="1" y="4" width="2" height="1" fill="#000060"/><rect x="3" y="4" width="1" height="1" fill="#B0A8F8"/><rect x="4" y="4" width="2" height="1" fill="#30E0F0"/><rect x="6" y="4" width="1" height="1" fill="#B0A8F8"/><rect x="7" y="4" width="2" height="1" fill="#50B0B0"/><rect x="9" y="4" width="1" height="1" fill="#B0A8F8"/><rect x="10" y="4" width="2" height="1" fill="#0000D0"/><rect x="12" y="4" width="1" height="1" fill="#B0A8F8"/><rect x="13" y="4" width="2" height="1" fill="#000060"/><rect x="15" y="4" width="1" height="1" fill="#B0A8F8"/><rect x="0" y="5" width="1" height="1" fill="#B0A8F8"/><rect x="1" y="5" width="2" height="1" fill="#000060"/><rect x="3" y="5" width="1" height="1" fill="#B0A8F8"/><rect x="4" y="5" width="2" height="1" fill="#30E0F0"/><rect x="6" y="5" width="1" height="1" fill="#B0A8F8"/><rect x="7" y="5" width="2" height="1" fill="#50B0B0"/><rect x="9" y="5" width="1" height="1" fill="#B0A8F8"/><rect x="10" y="5" width="2" height="1" fill="#0000D0"/><rect x="12" y="5" width="1" height="1" fill="#B0A8F8"/><rect x="13" y="5" width="2" height="1" fill="#000060"/><rect x="15" y="5" width="1" height="1" fill="#B0A8F8"/><rect x="0" y="6" width="16" height="1" fill="#B0A8F8"/><rect x="0" y="7" width="1" height="1" fill="#B0A8F8"/><rect x="1" y="7" width="2" height="1" fill="#000060"/><rect x="3" y="7" width="1" height="1" fill="#B0A8F8"/><rect x="4" y="7" width="2" height="1" fill="#50B0B0"/><rect x="6" y="7" width="1" height="1" fill="#B0A8F8"/><rect x="7" y="7" width="2" height="1" fill="#000060"/><rect x="9" y="7" width="1" height="1" fill="#B0A8F8"/><rect x="10" y="7" width="2" height="1" fill="#50B0B0"/><rect x="12" y="7" width="1" height="1" fill="#B0A8F8"/><rect x="13" y="7" width="2" height="1" fill="#000060"/><rect x="15" y="7" width="1" height="1" fill="#B0A8F8"/><rect x="0" y="8" width="1" height="1" fill="#B0A8F8"/><rect x="1" y="8" width="2" height="1" fill="#000060"/><rect x="3" y="8" width="1" height="1" fill="#B0A8F8"/><rect x="4" y="8" width="2" height="1" fill="#50B0B0"/><rect x="6" y="8" width="1" height="1" fill="#B0A8F8"/><rect x="7" y="8" width="2" height="1" fill="#000060"/><rect x="9" y="8" width="1" height="1" fill="#B0A8F8"/><rect x="10" y="8" width="2" height="1" fill="#50B0B0"/><rect x="12" y="8" width="1" height="1" fill="#B0A8F8"/><rect x="13" y="8" width="2" height="1" fill="#000060"/><rect x="15" y="8" width="1" height="1" fill="#B0A8F8"/><rect x="0" y="9" width="16" height="1" fill="#B0A8F8"/><rect x="0" y="10" width="1" height="1" fill="#B0A8F8"/><rect x="1" y="10" width="2" height="1" fill="#000060"/><rect x="3" y="10" width="1" height="1" fill="#B0A8F8"/><rect x="4" y="10" width="2" height="1" fill="#30E0F0"/><rect x="6" y="10" width="1" height="1" fill="#B0A8F8"/><rect x="7" y="10" width="2" height="1" fill="#50B0B0"/><rect x="9" y="10" width="1" height="1" fill="#B0A8F8"/><rect x="10" y="10" width="2" height="1" fill="#0000D0"/><rect x="12" y="10" width="1" height="1" fill="#B0A8F8"/><rect x="13" y="10" width="2" height="1" fill="#000060"/><rect x="15" y="10" width="1" height="1" fill="#B0A8F8"/><rect x="0" y="11" width="1" height="1" fill="#B0A8F8"/><rect x="1" y="11" width="2" height="1" fill="#000060"/><rect x="3" y="11" width="1" height="1" fill="#B0A8F8"/><rect x="4" y="11" width="2" height="1" fill="#30E0F0"/><rect x="6" y="11" width="1" height="1" fill="#B0A8F8"/><rect x="7" y="11" width="2" height="1" fill="#50B0B0"/><rect x="9" y="11" width="1" height="1" fill="#B0A8F8"/><rect x="10" y="11" width="2" height="1" fill="#0000D0"/><rect x="12" y="11" width="1" height="1" fill="#B0A8F8"/><rect x="13" y="11" width="2" height="1" fill="#000060"/><rect x="15" y="11" width="1" height="1" fill="#B0A8F8"/><rect x="0" y="12" width="16" height="1" fill="#B0A8F8"/><rect x="0" y="13" width="1" height="1" fill="#B0A8F8"/><rect x="1" y="13" width="2" height="1" fill="#000060"/><rect x="3" y="13" width="2" height="1" fill="#B0A8F8"/><rect x="5" y="13" width="2" height="1" fill="#000060"/><rect x="7" y="13" width="2" height="1" fill="#B0A8F8"/><rect x="9" y="13" width="2" height="1" fill="#000060"/><rect x="11" y="13" width="2" height="1" fill="#B0A8F8"/><rect x="13" y="13" width="2" height="1" fill="#000060"/><rect x="15" y="13" width="1" height="1" fill="#B0A8F8"/><rect x="0" y="14" width="1" height="1" fill="#B0A8F8"/><rect x="1" y="14" width="2" height="1" fill="#000060"/><rect x="3" y="14" width="2" height="1" fill="#B0A8F8"/><rect x="5" y="14" width="2" height="1" fill="#000060"/><rect x="7" y="14" width="2" height="1" fill="#B0A8F8"/><rect x="9" y="14" width="2" height="1" fill="#000060"/><rect x="11" y="14" width="2" height="1" fill="#B0A8F8"/><rect x="13" y="14" width="2" height="1" fill="#000060"/><rect x="15" y="14" width="1" height="1" fill="#B0A8F8"/><rect x="0" y="15" width="16" height="1" fill="#B0A8F8"/></svg></div>
<div class="a" style="left:21px;top:256px"><svg width="16" height="16" shape-rendering="crispEdges"><rect x="1" y="0" width="8" height="1" fill="#A0A098"/><rect x="0" y="1" width="1" height="1" fill="#A0A098"/><rect x="1" y="1" width="7" height="1" fill="#FFFFFF"/><rect x="8" y="1" width="1" height="1" fill="#A0A098"/><rect x="9" y="1" width="1" height="1" fill="#000000"/><rect x="0" y="2" width="1" height="1" fill="#A0A098"/><rect x="1" y="2" width="8" height="1" fill="#FFFFFF"/><rect x="9" y="2" width="1" height="1" fill="#000000"/><rect x="0" y="3" width="9" height="1" fill="#A0A098"/><rect x="9" y="3" width="1" height="1" fill="#000000"/><rect x="13" y="3" width="1" height="1" fill="#000000"/><rect x="0" y="4" width="1" height="1" fill="#A0A098"/><rect x="1" y="4" width="6" height="1" fill="#FFFFFF"/><rect x="7" y="4" width="1" height="1" fill="#000000"/><rect x="8" y="4" width="1" height="1" fill="#E0E050"/><rect x="9" y="4" width="1" height="1" fill="#000000"/><rect x="12" y="4" width="1" height="1" fill="#000000"/><rect x="13" y="4" width="1" height="1" fill="#E0E050"/><rect x="14" y="4" width="1" height="1" fill="#000000"/><rect x="0" y="5" width="1" height="1" fill="#A0A098"/><rect x="1" y="5" width="5" height="1" fill="#B0B0D8"/><rect x="6" y="5" width="1" height="1" fill="#000000"/><rect x="7" y="5" width="2" height="1" fill="#E0E050"/><rect x="9" y="5" width="3" height="1" fill="#000000"/><rect x="12" y="5" width="2" height="1" fill="#E0E050"/><rect x="14" y="5" width="1" height="1" fill="#000000"/><rect x="0" y="6" width="5" height="1" fill="#A0A098"/><rect x="5" y="6" width="1" height="1" fill="#000000"/><rect x="6" y="6" width="1" height="1" fill="#E0E050"/><rect x="7" y="6" width="1" height="1" fill="#000000"/><rect x="8" y="6" width="1" height="1" fill="#E0E050"/><rect x="9" y="6" width="1" height="1" fill="#000000"/><rect x="10" y="6" width="1" height="1" fill="#FFFFFF"/><rect x="11" y="6" width="1" height="1" fill="#000000"/><rect x="12" y="6" width="1" height="1" fill="#E0E050"/><rect x="13" y="6" width="2" height="1" fill="#000000"/><rect x="0" y="7" width="1" height="1" fill="#A0A098"/><rect x="1" y="7" width="4" height="1" fill="#FFFFFF"/><rect x="5" y="7" width="1" height="1" fill="#000000"/><rect x="6" y="7" width="4" height="1" fill="#E0E050"/><rect x="10" y="7" width="1" height="1" fill="#000000"/><rect x="11" y="7" width="3" height="1" fill="#E0E050"/><rect x="14" y="7" width="1" height="1" fill="#000000"/><rect x="0" y="8" width="1" height="1" fill="#A0A098"/><rect x="1" y="8" width="3" height="1" fill="#D8D0D8"/><rect x="4" y="8" width="2" height="1" fill="#000000"/><rect x="6" y="8" width="1" height="1" fill="#E0E050"/><rect x="7" y="8" width="1" height="1" fill="#000000"/><rect x="8" y="8" width="4" height="1" fill="#E0E050"/><rect x="12" y="8" width="1" height="1" fill="#000000"/><rect x="13" y="8" width="1" height="1" fill="#E0E050"/><rect x="14" y="8" width="1" height="1" fill="#000000"/><rect x="0" y="9" width="1" height="1" fill="#A0A098"/><rect x="1" y="9" width="3" height="1" fill="#D8D0D8"/><rect x="4" y="9" width="1" height="1" fill="#000000"/><rect x="5" y="9" width="3" height="1" fill="#E0E050"/><rect x="8" y="9" width="3" height="1" fill="#FFFFFF"/><rect x="11" y="9" width="2" height="1" fill="#E0E050"/><rect x="13" y="9" width="2" height="1" fill="#000000"/><rect x="0" y="10" width="1" height="1" fill="#A0A098"/><rect x="1" y="10" width="3" height="1" fill="#D8D0D8"/><rect x="4" y="10" width="1" height="1" fill="#FFFFFF"/><rect x="5" y="10" width="1" height="1" fill="#000000"/><rect x="6" y="10" width="1" height="1" fill="#E0E050"/><rect x="7" y="10" width="1" height="1" fill="#000000"/><rect x="8" y="10" width="2" height="1" fill="#FFFFFF"/><rect x="10" y="10" width="1" height="1" fill="#000000"/><rect x="11" y="10" width="3" height="1" fill="#E0E050"/><rect x="14" y="10" width="1" height="1" fill="#000000"/><rect x="0" y="11" width="1" height="1" fill="#A0A098"/><rect x="1" y="11" width="3" height="1" fill="#D8D0D8"/><rect x="4" y="11" width="1" height="1" fill="#FFFFFF"/><rect x="5" y="11" width="3" height="1" fill="#000000"/><rect x="8" y="11" width="1" height="1" fill="#E0E050"/><rect x="9" y="11" width="2" height="1" fill="#000000"/><rect x="11" y="11" width="1" height="1" fill="#E0E050"/><rect x="12" y="11" width="2" height="1" fill="#000000"/><rect x="0" y="12" width="1" height="1" fill="#A0A098"/><rect x="1" y="12" width="4" height="1" fill="#D8D0D8"/><rect x="5" y="12" width="1" height="1" fill="#A0A098"/><rect x="6" y="12" width="7" height="1" fill="#000000"/><rect x="0" y="13" width="1" height="1" fill="#A0A098"/><rect x="1" y="13" width="2" height="1" fill="#D8D0D8"/><rect x="3" y="13" width="2" height="1" fill="#000000"/><rect x="5" y="13" width="1" height="1" fill="#D8D0D8"/><rect x="6" y="13" width="2" height="1" fill="#A0A098"/><rect x="8" y="13" width="2" height="1" fill="#000000"/><rect x="0" y="14" width="1" height="1" fill="#A0A098"/><rect x="1" y="14" width="7" height="1" fill="#D8D0D8"/><rect x="8" y="14" width="2" height="1" fill="#000000"/><rect x="1" y="15" width="8" height="1" fill="#000000"/></svg></div>
</div>
<div class="a" style="left:2px;top:696px;width:196px;height:17px;background:#FDFDFA"></div>
<div class="a" style="left:2px;top:697px;width:16px;height:16px;border-radius:2px;background:#FFFFFF"></div>
<div class="a" style="left:3px;top:698px;width:14px;height:14px;border-radius:1px;background:linear-gradient(#D2DDFB 0,#C6D5FA 40%,#B6C9F6 100%);border-bottom:1px solid #A9B9E0;border-right:1px solid #B8C6EA"></div>
<svg class="a" style="left:2px;top:697px" width="16" height="16"><path d="M8.5 4.5L5.5 7.5L8.5 10.5" fill="none" stroke="#4D6185" stroke-width="2" stroke-linecap="square"/></svg>
<div class="a" style="left:19px;top:697px;width:137px;height:16px;border-radius:2px;background:#FFFFFF"></div>
<div class="a" style="left:20px;top:698px;width:135px;height:14px;border-radius:1px;background:linear-gradient(#D2DDFB 0,#C6D5FA 40%,#B6C9F6 100%);border-bottom:1px solid #A9B9E0;border-right:1px solid #B8C6EA"></div>
<div class="a" style="left:83px;top:701px;width:8px;height:7px;background:repeating-linear-gradient(90deg,#EEF4FF 0 1px,#8EA8E6 1px 2px)"></div>
<div class="a" style="left:182px;top:697px;width:16px;height:16px;border-radius:2px;background:#FFFFFF"></div>
<div class="a" style="left:183px;top:698px;width:14px;height:14px;border-radius:1px;background:linear-gradient(#D2DDFB 0,#C6D5FA 40%,#B6C9F6 100%);border-bottom:1px solid #A9B9E0;border-right:1px solid #B8C6EA"></div>
<svg class="a" style="left:182px;top:697px" width="16" height="16"><path d="M6.5 4.5L9.5 7.5L6.5 10.5" fill="none" stroke="#4D6185" stroke-width="2" stroke-linecap="square"/></svg>
<div class="a" style="left:204px;top:79px;width:818px;height:634px;background:#ECE9D8"></div>
<div class="a" style="left:204px;top:79px;width:1px;height:634px;background:#8E8C7E"></div>
<div class="a" style="left:204px;top:79px;width:818px;height:1px;background:#8E8C7E"></div>
<div class="a" style="left:204px;top:79px;width:818px;height:171px;background:#fff;border-left:1px solid #8E8C7E;border-top:1px solid #8E8C7E"></div>
<div class="a" style="left:205px;top:80px;width:817px;height:16px;background:linear-gradient(#ECEADB,#EBE9DA)"></div>
<div class="a" style="left:205px;top:96px;width:817px;height:1px;background:#A9A593"></div>
<div class="a" style="left:205px;top:95px;width:817px;height:1px;background:#D5D1BE"></div>
<div class="a" style="left:205px;top:80px;width:45px;height:15px;background:linear-gradient(#FCFCF9 0,#F6F5EE 30%,#EFEDE3 100%)"></div>
<div class="a" style="left:251px;top:80px;width:58px;height:15px;background:linear-gradient(#FCFCF9 0,#F6F5EE 30%,#EFEDE3 100%)"></div>
<div class="a" style="left:310px;top:80px;width:50px;height:15px;background:linear-gradient(#FCFCF9 0,#F6F5EE 30%,#EFEDE3 100%)"></div>
<div class="a" style="left:361px;top:80px;width:88px;height:15px;background:linear-gradient(#FCFCF9 0,#F6F5EE 30%,#EFEDE3 100%)"></div>
<div class="a" style="left:450px;top:80px;width:105px;height:15px;background:linear-gradient(#FCFCF9 0,#F6F5EE 30%,#EFEDE3 100%)"></div>
<div class="a" style="left:556px;top:80px;width:55px;height:15px;background:linear-gradient(#FCFCF9 0,#F6F5EE 30%,#EFEDE3 100%)"></div>
<div class="a" style="left:612px;top:80px;width:65px;height:15px;background:linear-gradient(#FCFCF9 0,#F6F5EE 30%,#EFEDE3 100%)"></div>
<div class="a" style="left:678px;top:80px;width:91px;height:15px;background:linear-gradient(#FCFCF9 0,#F6F5EE 30%,#EFEDE3 100%)"></div>
<div class="a" style="left:770px;top:80px;width:120px;height:15px;background:linear-gradient(#FCFCF9 0,#F6F5EE 30%,#EFEDE3 100%)"></div>
<div class="a" style="left:891px;top:80px;width:36px;height:15px;background:linear-gradient(#FCFCF9 0,#F6F5EE 30%,#EFEDE3 100%)"></div>
<div class="a" style="left:250px;top:80px;width:1px;height:16px;background:#8E8C7E"></div><div class="a" style="left:251px;top:80px;width:1px;height:15px;background:#fff"></div>
<div class="a" style="left:309px;top:80px;width:1px;height:16px;background:#8E8C7E"></div><div class="a" style="left:310px;top:80px;width:1px;height:15px;background:#fff"></div>
<div class="a" style="left:360px;top:80px;width:1px;height:16px;background:#8E8C7E"></div><div class="a" style="left:361px;top:80px;width:1px;height:15px;background:#fff"></div>
<div class="a" style="left:449px;top:80px;width:1px;height:16px;background:#8E8C7E"></div><div class="a" style="left:450px;top:80px;width:1px;height:15px;background:#fff"></div>
<div class="a" style="left:555px;top:80px;width:1px;height:16px;background:#8E8C7E"></div><div class="a" style="left:556px;top:80px;width:1px;height:15px;background:#fff"></div>
<div class="a" style="left:611px;top:80px;width:1px;height:16px;background:#8E8C7E"></div><div class="a" style="left:612px;top:80px;width:1px;height:15px;background:#fff"></div>
<div class="a" style="left:677px;top:80px;width:1px;height:16px;background:#8E8C7E"></div><div class="a" style="left:678px;top:80px;width:1px;height:15px;background:#fff"></div>
<div class="a" style="left:769px;top:80px;width:1px;height:16px;background:#8E8C7E"></div><div class="a" style="left:770px;top:80px;width:1px;height:15px;background:#fff"></div>
<div class="a" style="left:890px;top:80px;width:1px;height:16px;background:#8E8C7E"></div><div class="a" style="left:891px;top:80px;width:1px;height:15px;background:#fff"></div>
<div class="a" style="left:927px;top:80px;width:1px;height:16px;background:#8E8C7E"></div><div class="a" style="left:928px;top:80px;width:1px;height:15px;background:#fff"></div>
<div class="t" style="left:210px;top:83px">Svazek</div>
<div class="t" style="left:256px;top:83px">Rozvržení</div>
<div class="t" style="left:315px;top:83px">Typ</div>
<div class="t" style="left:366px;top:83px">Systém souborů</div>
<div class="t" style="left:455px;top:83px">Stav</div>
<div class="t" style="left:561px;top:83px">Kapacita</div>
<div class="t" style="left:617px;top:83px">Volné místo</div>
<div class="t" style="left:683px;top:83px">% volného místa</div>
<div class="t" style="left:775px;top:83px">Odolnost proti chybám</div>
<div class="t" style="left:896px;top:83px">Režie</div>
<div class="a" style="left:207px;top:101px"><svg width="16" height="9" shape-rendering="crispEdges"><rect x="2" y="0" width="12" height="1" fill="#5A78B8"/><rect x="1" y="1" width="1" height="1" fill="#5A78B8"/><rect x="2" y="1" width="12" height="1" fill="#B8CCF0"/><rect x="14" y="1" width="1" height="1" fill="#1A2A70"/><rect x="0" y="2" width="1" height="1" fill="#5A78B8"/><rect x="1" y="2" width="13" height="1" fill="#8AA4D8"/><rect x="14" y="2" width="1" height="1" fill="#4A64A8"/><rect x="15" y="2" width="1" height="1" fill="#1A2A70"/><rect x="0" y="3" width="1" height="1" fill="#5A78B8"/><rect x="1" y="3" width="11" height="1" fill="#B8CCF0"/><rect x="12" y="3" width="1" height="1" fill="#1A2A70"/><rect x="13" y="3" width="1" height="1" fill="#B8CCF0"/><rect x="14" y="3" width="1" height="1" fill="#4A64A8"/><rect x="15" y="3" width="1" height="1" fill="#1A2A70"/><rect x="0" y="4" width="1" height="1" fill="#5A78B8"/><rect x="1" y="4" width="13" height="1" fill="#6E8CC8"/><rect x="14" y="4" width="1" height="1" fill="#4A64A8"/><rect x="15" y="4" width="1" height="1" fill="#1A2A70"/><rect x="0" y="5" width="1" height="1" fill="#5A78B8"/><rect x="1" y="5" width="13" height="1" fill="#6E8CC8"/><rect x="14" y="5" width="1" height="1" fill="#4A64A8"/><rect x="15" y="5" width="1" height="1" fill="#1A2A70"/><rect x="0" y="6" width="1" height="1" fill="#1A2A70"/><rect x="1" y="6" width="14" height="1" fill="#4A64A8"/><rect x="15" y="6" width="1" height="1" fill="#1A2A70"/><rect x="1" y="7" width="14" height="1" fill="#1A2A70"/></svg></div>
<div class="a" style="left:223px;top:97px;width:28px;height:17px;background:#316AC5"></div>
<div class="t" style="left:228px;top:100px;color:#fff">(C:)</div>
<div class="t" style="left:256px;top:100px;color:#000">Oddíl</div>
<div class="t" style="left:315px;top:100px;color:#000">Základní</div>
<div class="t" style="left:366px;top:100px;color:#000">NTFS</div>
<div class="t" style="left:455px;top:100px;color:#000">V pořádku (Systém)</div>
<div class="t" style="left:561px;top:100px;color:#000">97,65 GB</div>
<div class="t" style="left:617px;top:100px;color:#000">88,40 GB</div>
<div class="t" style="left:683px;top:100px;color:#000">90 %</div>
<div class="t" style="left:775px;top:100px;color:#000">Žádné</div>
<div class="t" style="left:896px;top:100px;color:#000">0%</div>
<div class="a" style="left:207px;top:118px"><svg width="16" height="9" shape-rendering="crispEdges"><rect x="2" y="0" width="12" height="1" fill="#A0A0A0"/><rect x="1" y="1" width="1" height="1" fill="#A0A0A0"/><rect x="2" y="1" width="12" height="1" fill="#F8F8F8"/><rect x="14" y="1" width="1" height="1" fill="#000000"/><rect x="0" y="2" width="1" height="1" fill="#A0A0A0"/><rect x="1" y="2" width="13" height="1" fill="#DCDCDC"/><rect x="14" y="2" width="1" height="1" fill="#909090"/><rect x="15" y="2" width="1" height="1" fill="#000000"/><rect x="0" y="3" width="1" height="1" fill="#A0A0A0"/><rect x="1" y="3" width="11" height="1" fill="#F8F8F8"/><rect x="12" y="3" width="1" height="1" fill="#000000"/><rect x="13" y="3" width="1" height="1" fill="#F8F8F8"/><rect x="14" y="3" width="1" height="1" fill="#909090"/><rect x="15" y="3" width="1" height="1" fill="#000000"/><rect x="0" y="4" width="1" height="1" fill="#A0A0A0"/><rect x="1" y="4" width="13" height="1" fill="#C4C4C4"/><rect x="14" y="4" width="1" height="1" fill="#909090"/><rect x="15" y="4" width="1" height="1" fill="#000000"/><rect x="0" y="5" width="1" height="1" fill="#A0A0A0"/><rect x="1" y="5" width="13" height="1" fill="#C4C4C4"/><rect x="14" y="5" width="1" height="1" fill="#909090"/><rect x="15" y="5" width="1" height="1" fill="#000000"/><rect x="0" y="6" width="1" height="1" fill="#000000"/><rect x="1" y="6" width="14" height="1" fill="#909090"/><rect x="15" y="6" width="1" height="1" fill="#000000"/><rect x="1" y="7" width="14" height="1" fill="#000000"/></svg></div>
<div class="t" style="left:228px;top:117px;color:#000">(D:)</div>
<div class="t" style="left:256px;top:117px;color:#000">Oddíl</div>
<div class="t" style="left:315px;top:117px;color:#000">Základní</div>
<div class="t" style="left:366px;top:117px;color:#000">NTFS</div>
<div class="t" style="left:455px;top:117px;color:#000">V pořádku</div>
<div class="t" style="left:561px;top:117px;color:#000">97,65 GB</div>
<div class="t" style="left:617px;top:117px;color:#000">34,00 GB</div>
<div class="t" style="left:683px;top:117px;color:#000">34 %</div>
<div class="t" style="left:775px;top:117px;color:#000">Žádné</div>
<div class="t" style="left:896px;top:117px;color:#000">0%</div>
<div class="a" style="left:207px;top:135px"><svg width="16" height="9" shape-rendering="crispEdges"><rect x="2" y="0" width="12" height="1" fill="#A0A0A0"/><rect x="1" y="1" width="1" height="1" fill="#A0A0A0"/><rect x="2" y="1" width="12" height="1" fill="#F8F8F8"/><rect x="14" y="1" width="1" height="1" fill="#000000"/><rect x="0" y="2" width="1" height="1" fill="#A0A0A0"/><rect x="1" y="2" width="13" height="1" fill="#DCDCDC"/><rect x="14" y="2" width="1" height="1" fill="#909090"/><rect x="15" y="2" width="1" height="1" fill="#000000"/><rect x="0" y="3" width="1" height="1" fill="#A0A0A0"/><rect x="1" y="3" width="11" height="1" fill="#F8F8F8"/><rect x="12" y="3" width="1" height="1" fill="#000000"/><rect x="13" y="3" width="1" height="1" fill="#F8F8F8"/><rect x="14" y="3" width="1" height="1" fill="#909090"/><rect x="15" y="3" width="1" height="1" fill="#000000"/><rect x="0" y="4" width="1" height="1" fill="#A0A0A0"/><rect x="1" y="4" width="13" height="1" fill="#C4C4C4"/><rect x="14" y="4" width="1" height="1" fill="#909090"/><rect x="15" y="4" width="1" height="1" fill="#000000"/><rect x="0" y="5" width="1" height="1" fill="#A0A0A0"/><rect x="1" y="5" width="13" height="1" fill="#C4C4C4"/><rect x="14" y="5" width="1" height="1" fill="#909090"/><rect x="15" y="5" width="1" height="1" fill="#000000"/><rect x="0" y="6" width="1" height="1" fill="#000000"/><rect x="1" y="6" width="14" height="1" fill="#909090"/><rect x="15" y="6" width="1" height="1" fill="#000000"/><rect x="1" y="7" width="14" height="1" fill="#000000"/></svg></div>
<div class="t" style="left:228px;top:134px;color:#000">(E:)</div>
<div class="t" style="left:256px;top:134px;color:#000">Oddíl</div>
<div class="t" style="left:315px;top:134px;color:#000">Základní</div>
<div class="t" style="left:366px;top:134px;color:#000">NTFS</div>
<div class="t" style="left:455px;top:134px;color:#000">V pořádku</div>
<div class="t" style="left:561px;top:134px;color:#000">37,57 GB</div>
<div class="t" style="left:617px;top:134px;color:#000">21,96 GB</div>
<div class="t" style="left:683px;top:134px;color:#000">58 %</div>
<div class="t" style="left:775px;top:134px;color:#000">Žádné</div>
<div class="t" style="left:896px;top:134px;color:#000">0%</div>
<div class="a" style="left:205px;top:249px;width:817px;height:7px;background:linear-gradient(#E2E0D2 0,#E2E0D2 1px,#F6F5EC 1px,#F3F1E6 3px,#E8E6D8 5px,#DCD9C8 6px)"></div>
<div class="a" style="left:205px;top:256px;width:817px;height:1px;background:#85826F"></div>
<div class="a" style="left:1018px;top:249px;width:3px;height:7px;background:#85826F"></div>
<div class="a" style="left:205px;top:261px;width:818px;height:1px;background:#FFFFFF"></div>
<div class="a" style="left:205px;top:331px;width:818px;height:1px;background:#8E8C7E"></div>
<div class="a" style="left:205px;top:261px;width:1px;height:70px;background:#FFFFFF"></div>
<div class="a" style="left:359px;top:262px;width:1px;height:69px;background:#FFFFFF"></div>
<div class="a" style="left:360px;top:262px;width:1px;height:69px;background:#8E8C7E"></div>
<div class="a" style="left:361px;top:262px;width:1px;height:69px;background:#FFFFFF"></div>
<div class="a" style="left:205px;top:332px;width:818px;height:1px;background:#FFFFFF"></div>
<div class="a" style="left:205px;top:402px;width:818px;height:1px;background:#8E8C7E"></div>
<div class="a" style="left:205px;top:332px;width:1px;height:70px;background:#FFFFFF"></div>
<div class="a" style="left:359px;top:333px;width:1px;height:69px;background:#FFFFFF"></div>
<div class="a" style="left:360px;top:333px;width:1px;height:69px;background:#8E8C7E"></div>
<div class="a" style="left:361px;top:333px;width:1px;height:69px;background:#FFFFFF"></div>
<div class="a" style="left:215px;top:268px"><svg width="16" height="10" shape-rendering="crispEdges"><rect x="1" y="0" width="13" height="1" fill="#707070"/><rect x="14" y="0" width="1" height="1" fill="#000000"/><rect x="1" y="1" width="1" height="1" fill="#707070"/><rect x="2" y="1" width="10" height="1" fill="#A8AEA8"/><rect x="12" y="1" width="1" height="1" fill="#90A890"/><rect x="13" y="1" width="1" height="1" fill="#000000"/><rect x="14" y="1" width="1" height="1" fill="#E8ECE8"/><rect x="15" y="1" width="1" height="1" fill="#000000"/><rect x="0" y="2" width="1" height="1" fill="#707070"/><rect x="1" y="2" width="9" height="1" fill="#E8ECE8"/><rect x="10" y="2" width="3" height="1" fill="#90A890"/><rect x="13" y="2" width="1" height="1" fill="#E8ECE8"/><rect x="14" y="2" width="2" height="1" fill="#000000"/><rect x="0" y="3" width="1" height="1" fill="#707070"/><rect x="1" y="3" width="5" height="1" fill="#A8AEA8"/><rect x="6" y="3" width="1" height="1" fill="#000000"/><rect x="7" y="3" width="1" height="1" fill="#D8D890"/><rect x="8" y="3" width="5" height="1" fill="#A8AEA8"/><rect x="13" y="3" width="1" height="1" fill="#000000"/><rect x="14" y="3" width="1" height="1" fill="#E8ECE8"/><rect x="15" y="3" width="1" height="1" fill="#000000"/><rect x="0" y="4" width="1" height="1" fill="#707070"/><rect x="1" y="4" width="2" height="1" fill="#A8AEA8"/><rect x="3" y="4" width="4" height="1" fill="#000000"/><rect x="7" y="4" width="1" height="1" fill="#D8D890"/><rect x="8" y="4" width="6" height="1" fill="#000000"/><rect x="14" y="4" width="1" height="1" fill="#E8ECE8"/><rect x="15" y="4" width="1" height="1" fill="#000000"/><rect x="0" y="5" width="2" height="1" fill="#000000"/><rect x="2" y="5" width="3" height="1" fill="#E8ECE8"/><rect x="5" y="5" width="1" height="1" fill="#000000"/><rect x="6" y="5" width="2" height="1" fill="#D8D890"/><rect x="8" y="5" width="1" height="1" fill="#000000"/><rect x="9" y="5" width="5" height="1" fill="#A8AEA8"/><rect x="14" y="5" width="2" height="1" fill="#000000"/><rect x="0" y="6" width="1" height="1" fill="#000000"/><rect x="1" y="6" width="2" height="1" fill="#E8ECE8"/><rect x="3" y="6" width="1" height="1" fill="#707070"/><rect x="4" y="6" width="2" height="1" fill="#E8ECE8"/><rect x="6" y="6" width="1" height="1" fill="#000000"/><rect x="7" y="6" width="1" height="1" fill="#D8D890"/><rect x="8" y="6" width="1" height="1" fill="#000000"/><rect x="9" y="6" width="5" height="1" fill="#E8ECE8"/><rect x="14" y="6" width="1" height="1" fill="#000000"/><rect x="15" y="6" width="1" height="1" fill="#E8ECE8"/><rect x="1" y="7" width="2" height="1" fill="#000000"/><rect x="3" y="7" width="2" height="1" fill="#E8ECE8"/><rect x="5" y="7" width="2" height="1" fill="#000000"/><rect x="7" y="7" width="1" height="1" fill="#D8D890"/><rect x="8" y="7" width="7" height="1" fill="#000000"/><rect x="4" y="8" width="3" height="1" fill="#000000"/><rect x="7" y="8" width="1" height="1" fill="#D8D890"/><rect x="8" y="8" width="1" height="1" fill="#000000"/><rect x="7" y="9" width="2" height="1" fill="#000000"/></svg></div>
<div class="t" style="left:232px;top:268px;font-weight:bold;font-size:11.6px">Disk 0</div>
<div class="t" style="left:214px;top:282px;letter-spacing:-0.5px">Základní</div>
<div class="t" style="left:214px;top:295px;letter-spacing:-0.4px">232,88 GB</div>
<div class="t" style="left:214px;top:308px;letter-spacing:-0.5px">Online</div>
<div class="a" style="left:215px;top:336px"><svg width="16" height="15" shape-rendering="crispEdges"><rect x="10" y="1" width="2" height="1" fill="#C0A040"/><rect x="8" y="2" width="2" height="1" fill="#40C080"/><rect x="10" y="2" width="2" height="1" fill="#F0E030"/><rect x="12" y="2" width="2" height="1" fill="#E0F0F0"/><rect x="7" y="3" width="3" height="1" fill="#40C080"/><rect x="10" y="3" width="2" height="1" fill="#F0E030"/><rect x="12" y="3" width="2" height="1" fill="#E0F0F0"/><rect x="14" y="3" width="1" height="1" fill="#000000"/><rect x="7" y="4" width="3" height="1" fill="#40C080"/><rect x="10" y="4" width="1" height="1" fill="#F0E030"/><rect x="11" y="4" width="1" height="1" fill="#000000"/><rect x="12" y="4" width="3" height="1" fill="#E0F0F0"/><rect x="15" y="4" width="1" height="1" fill="#000000"/><rect x="7" y="5" width="2" height="1" fill="#40C080"/><rect x="9" y="5" width="2" height="1" fill="#000000"/><rect x="11" y="5" width="1" height="1" fill="#E0F0F0"/><rect x="12" y="5" width="1" height="1" fill="#000000"/><rect x="13" y="5" width="2" height="1" fill="#E0F0F0"/><rect x="15" y="5" width="1" height="1" fill="#000000"/><rect x="7" y="6" width="3" height="1" fill="#40C080"/><rect x="10" y="6" width="2" height="1" fill="#000000"/><rect x="12" y="6" width="3" height="1" fill="#E0F0F0"/><rect x="15" y="6" width="1" height="1" fill="#000000"/><rect x="7" y="7" width="1" height="1" fill="#808880"/><rect x="8" y="7" width="3" height="1" fill="#40C080"/><rect x="11" y="7" width="1" height="1" fill="#E0F0F0"/><rect x="12" y="7" width="3" height="1" fill="#808880"/><rect x="15" y="7" width="1" height="1" fill="#000000"/><rect x="0" y="8" width="7" height="1" fill="#808880"/><rect x="7" y="8" width="1" height="1" fill="#A0C0A0"/><rect x="8" y="8" width="4" height="1" fill="#40C080"/><rect x="12" y="8" width="2" height="1" fill="#808880"/><rect x="14" y="8" width="1" height="1" fill="#000000"/><rect x="0" y="9" width="1" height="1" fill="#808880"/><rect x="1" y="9" width="6" height="1" fill="#E0F0F0"/><rect x="7" y="9" width="2" height="1" fill="#A0C0A0"/><rect x="9" y="9" width="3" height="1" fill="#D0F0E0"/><rect x="12" y="9" width="1" height="1" fill="#808880"/><rect x="13" y="9" width="2" height="1" fill="#000000"/><rect x="0" y="10" width="1" height="1" fill="#808880"/><rect x="1" y="10" width="1" height="1" fill="#E0F0F0"/><rect x="2" y="10" width="11" height="1" fill="#D0F0E0"/><rect x="13" y="10" width="1" height="1" fill="#000000"/><rect x="0" y="11" width="1" height="1" fill="#808880"/><rect x="1" y="11" width="1" height="1" fill="#E0F0F0"/><rect x="2" y="11" width="1" height="1" fill="#D0F0E0"/><rect x="3" y="11" width="9" height="1" fill="#000000"/><rect x="12" y="11" width="1" height="1" fill="#E0F0F0"/><rect x="13" y="11" width="1" height="1" fill="#D0F0E0"/><rect x="14" y="11" width="1" height="1" fill="#000000"/><rect x="0" y="12" width="1" height="1" fill="#808880"/><rect x="1" y="12" width="1" height="1" fill="#E0F0F0"/><rect x="2" y="12" width="12" height="1" fill="#D0F0E0"/><rect x="14" y="12" width="1" height="1" fill="#000000"/><rect x="0" y="13" width="1" height="1" fill="#808880"/><rect x="1" y="13" width="8" height="1" fill="#E0F0F0"/><rect x="9" y="13" width="3" height="1" fill="#E0D0E8"/><rect x="12" y="13" width="2" height="1" fill="#B0C0E8"/><rect x="14" y="13" width="1" height="1" fill="#000000"/><rect x="1" y="14" width="14" height="1" fill="#000000"/></svg></div>
<div class="t" style="left:232px;top:339px;font-weight:bold;font-size:11.6px">Jednotka CD-ROM 0</div>
<div class="t" style="left:213px;top:353px;letter-spacing:-0.2px">Disk DVD (F:)</div>
<div class="t" style="left:214px;top:379px;letter-spacing:-0.3px">Žádné médium</div>
<div class="a" style="left:363px;top:266px;width:222px;height:11px;background:#000080"></div>
<div class="a" style="left:363px;top:277px;width:223px;height:50px;background:#ACA899"></div>
<div class="a" style="left:363px;top:277px;width:222px;height:1px;background:#C8C5B5"></div>
<div class="a" style="left:367px;top:280px;width:215px;height:43px;background:#fff;overflow:hidden"><svg width="215" height="43" style="position:absolute;left:0;top:0"><defs><pattern id="hatch" width="8" height="8" patternUnits="userSpaceOnUse"><path d="M0 8L8 0M-1 1L1 -1M7 9L9 7" stroke="#858585" stroke-width="0.8"/></pattern></defs><rect width="215" height="43" fill="url(#hatch)"/></svg></div>
<div class="t" style="left:375px;top:283px;font-weight:bold;font-size:11.8px;background:#fff;padding:0 1px">(C:)</div>
<div class="t" style="left:369px;top:297px;background:#fff;letter-spacing:-0.35px">97,65 GB NTFS</div>
<div class="t" style="left:369px;top:310px;background:#fff;letter-spacing:-0.2px">V pořádku (Systém)</div>
<div class="a" style="left:587px;top:263px;width:433px;height:2px;background:#008000"></div>
<div class="a" style="left:587px;top:327px;width:433px;height:3px;background:#008000"></div>
<div class="a" style="left:587px;top:263px;width:4px;height:67px;background:#008000"></div>
<div class="a" style="left:1016px;top:263px;width:4px;height:67px;background:#008000"></div>
<div class="a" style="left:591px;top:265px;width:425px;height:62px;background:#ECE9D8"></div>
<div class="a" style="left:591px;top:265px;width:425px;height:1px;background:#F4FFF4"></div>
<div class="a" style="left:591px;top:265px;width:1px;height:62px;background:#F4FFF4"></div>
<div class="a" style="left:1015px;top:265px;width:1px;height:62px;background:#F4FFF4"></div>
<div class="a" style="left:811px;top:265px;width:1px;height:62px;background:#8E8C7E"></div>
<div class="a" style="left:592px;top:266px;width:218px;height:11px;background:#0000FF"></div>
<div class="a" style="left:592px;top:277px;width:218px;height:1px;background:#F8F8F2"></div>
<div class="a" style="left:595px;top:280px;width:212px;height:44px;background:#FFFFFF;border-left:1px solid #ACA899;border-top:1px solid #ACA899"></div>
<div class="t" style="left:605px;top:283px;font-weight:bold;font-size:11.8px">(D:)</div>
<div class="t" style="left:599px;top:297px;letter-spacing:-0.35px">97,65 GB NTFS</div>
<div class="t" style="left:599px;top:310px">V pořádku</div>
<div class="a" style="left:813px;top:266px;width:202px;height:11px;background:#0000FF"></div>
<div class="a" style="left:813px;top:277px;width:202px;height:1px;background:#F8F8F2"></div>
<div class="a" style="left:816px;top:280px;width:196px;height:44px;background:#FFFFFF;border-left:1px solid #ACA899;border-top:1px solid #ACA899"></div>
<div class="t" style="left:826px;top:283px;font-weight:bold;font-size:11.8px">(E:)</div>
<div class="t" style="left:820px;top:297px;letter-spacing:-0.35px">37,57 GB NTFS</div>
<div class="t" style="left:820px;top:310px">V pořádku</div>
<div class="a" style="left:205px;top:693px;width:817px;height:1px;background:#FFFFFF"></div>
<div class="a" style="left:1021px;top:693px;width:1px;height:20px;background:#8E8C7E"></div>
<div class="a" style="left:1023px;top:79px;width:1px;height:635px;background:#FFFFFF"></div>
<div class="a" style="left:211px;top:697px;width:11px;height:12px;background:#000080"></div>
<div class="t" style="left:226px;top:696px;letter-spacing:-0.5px">Primární oddíl</div>
<div class="a" style="left:298px;top:697px;width:11px;height:12px;background:#008000"></div>
<div class="t" style="left:313px;top:696px;letter-spacing:0">Rozšířený oddíl</div>
<div class="a" style="left:395px;top:697px;width:11px;height:12px;background:#0000FF"></div>
<div class="t" style="left:410px;top:696px;letter-spacing:0">Logická jednotka</div>
<div class="a" style="left:1px;top:712px;width:1023px;height:1px;background:#ECE9D8"></div>
<div class="a" style="left:204px;top:712px;width:818px;height:1px;background:#8E8C7E"></div>
<div class="a" style="left:1px;top:713px;width:1023px;height:2px;background:#FBFBF6"></div>
<div class="a" style="left:0;top:715px;width:1024px;height:1px;background:#B9B6A6"></div>
<div class="a" style="left:802px;top:718px;width:1px;height:19px;background:#C5C2B2"></div><div class="a" style="left:803px;top:718px;width:1px;height:19px;background:#fff"></div>
<div class="a" style="left:934px;top:718px;width:1px;height:19px;background:#C5C2B2"></div><div class="a" style="left:935px;top:718px;width:1px;height:19px;background:#fff"></div>
<div class="a" style="left:1020px;top:718px;width:1px;height:19px;background:#C5C2B2"></div><div class="a" style="left:1021px;top:718px;width:1px;height:19px;background:#fff"></div>
<div class="a" style="left:0;top:737px;width:1024px;height:1px;background:#E6E6EE"></div>
<div class="a" style="left:0;top:738px;width:1024px;height:30px;background:linear-gradient(#1F52C8 0,#1F52C8 1px,#3D86F5 1px,#3A82F2 3px,#2B68E0 4px,#245EDC 6px,#245DDB 24px,#2158D4 27px,#1C48B4 30px)"></div>
<div class="a" style="left:0;top:738px;width:98px;height:30px;border-radius:0 10px 10px 0/0 15px 15px 0;background:linear-gradient(#3A7A3A 0,#3A7A3A 1px,#6CBF6C 1px,#5AB45A 3px,#3EA33E 6px,#37A137 20px,#34A034 26px,#2F8F2F 30px)"></div>
<div class="a" style="left:0;top:739px;width:98px;height:29px;border-radius:0 10px 10px 0/0 15px 15px 0;background:linear-gradient(90deg,rgba(255,255,255,0.06) 0,rgba(0,0,0,0) 40%,rgba(0,0,0,0) 85%,rgba(0,40,0,0.25) 100%)"></div>
<svg class="a" style="left:10px;top:743px" width="20" height="19"><path d="M2.5 2.2Q6.5 0 11.5 2L10 8.5Q5.5 6.8 1.2 8.5Z" fill="#F25A22"/><path d="M12.5 2.6Q15.5 4 19 2.8L17.6 9.2Q14.5 10.2 11.2 9Z" fill="#7CC63A"/><path d="M1 9.6Q5.5 8 9.8 9.6L8.3 16Q4.2 14.4 0 16Z" fill="#3B7EEA"/><path d="M11 10.2Q14.5 11.3 17.3 10.2L16 16.8Q12.7 17.8 9.6 16.6Z" fill="#FCC21E"/></svg>
<div class="t" style="left:34px;top:743px;color:#fff;font-weight:bold;font-style:italic;font-size:18px;line-height:20px;text-shadow:1px 1px 1px #1A3A1A;letter-spacing:0.3px">Start</div>
<div class="a" style="left:109px;top:742px;width:135px;height:23px;border-radius:3px;background:linear-gradient(#4A90F8 0,#3D82F2 3px,#3B80F0 100%);border:1px solid;border-color:#5FA0FA #2C62D6 #2C62D6 #5A9AF8"></div>
<div class="a" style="left:118px;top:745px"><svg width="16" height="16" shape-rendering="crispEdges"><rect x="6" y="1" width="3" height="1" fill="#90D8FA"/><rect x="5" y="2" width="1" height="1" fill="#90D8FA"/><rect x="6" y="2" width="2" height="1" fill="#3A78D0"/><rect x="8" y="2" width="1" height="1" fill="#90D8FA"/><rect x="1" y="3" width="1" height="1" fill="#FFFFFF"/><rect x="4" y="3" width="1" height="1" fill="#90D8FA"/><rect x="5" y="3" width="2" height="1" fill="#3A78D0"/><rect x="7" y="3" width="1" height="1" fill="#90D8FA"/><rect x="1" y="4" width="1" height="1" fill="#FFFFFF"/><rect x="2" y="4" width="1" height="1" fill="#3A78D0"/><rect x="4" y="4" width="1" height="1" fill="#90D8FA"/><rect x="5" y="4" width="2" height="1" fill="#3A78D0"/><rect x="7" y="4" width="5" height="1" fill="#FFFFFF"/><rect x="12" y="4" width="1" height="1" fill="#14306C"/><rect x="1" y="5" width="1" height="1" fill="#FFFFFF"/><rect x="2" y="5" width="4" height="1" fill="#3A78D0"/><rect x="6" y="5" width="4" height="1" fill="#FFFFFF"/><rect x="10" y="5" width="1" height="1" fill="#B08070"/><rect x="11" y="5" width="1" height="1" fill="#FFFFFF"/><rect x="12" y="5" width="1" height="1" fill="#14306C"/><rect x="1" y="6" width="11" height="1" fill="#FFFFFF"/><rect x="12" y="6" width="1" height="1" fill="#14306C"/><rect x="1" y="7" width="6" height="1" fill="#FFFFFF"/><rect x="7" y="7" width="4" height="1" fill="#3A78D0"/><rect x="11" y="7" width="1" height="1" fill="#FFFFFF"/><rect x="12" y="7" width="2" height="1" fill="#14306C"/><rect x="1" y="8" width="1" height="1" fill="#FFFFFF"/><rect x="2" y="8" width="1" height="1" fill="#B08070"/><rect x="3" y="8" width="3" height="1" fill="#FFFFFF"/><rect x="6" y="8" width="5" height="1" fill="#3A78D0"/><rect x="11" y="8" width="1" height="1" fill="#FFFFFF"/><rect x="12" y="8" width="2" height="1" fill="#14306C"/><rect x="1" y="9" width="4" height="1" fill="#FFFFFF"/><rect x="5" y="9" width="3" height="1" fill="#3A78D0"/><rect x="8" y="9" width="1" height="1" fill="#90D8FA"/><rect x="9" y="9" width="2" height="1" fill="#3A78D0"/><rect x="11" y="9" width="1" height="1" fill="#FFFFFF"/><rect x="12" y="9" width="2" height="1" fill="#14306C"/><rect x="1" y="10" width="3" height="1" fill="#FFFFFF"/><rect x="4" y="10" width="3" height="1" fill="#3A78D0"/><rect x="7" y="10" width="2" height="1" fill="#90D8FA"/><rect x="9" y="10" width="2" height="1" fill="#3A78D0"/><rect x="11" y="10" width="1" height="1" fill="#FFFFFF"/><rect x="12" y="10" width="1" height="1" fill="#14306C"/><rect x="1" y="11" width="1" height="1" fill="#14306C"/><rect x="2" y="11" width="1" height="1" fill="#FFFFFF"/><rect x="3" y="11" width="3" height="1" fill="#3A78D0"/><rect x="6" y="11" width="2" height="1" fill="#90D8FA"/><rect x="8" y="11" width="2" height="1" fill="#3A78D0"/><rect x="10" y="11" width="1" height="1" fill="#FFFFFF"/><rect x="11" y="11" width="2" height="1" fill="#14306C"/><rect x="2" y="12" width="2" height="1" fill="#14306C"/><rect x="4" y="12" width="2" height="1" fill="#3A78D0"/><rect x="6" y="12" width="1" height="1" fill="#90D8FA"/><rect x="7" y="12" width="3" height="1" fill="#3A78D0"/><rect x="10" y="12" width="2" height="1" fill="#14306C"/><rect x="3" y="13" width="3" height="1" fill="#14306C"/><rect x="6" y="13" width="2" height="1" fill="#3A78D0"/><rect x="8" y="13" width="2" height="1" fill="#14306C"/><rect x="5" y="14" width="3" height="1" fill="#14306C"/></svg></div>
<div class="t" style="left:138px;top:747px;color:#fff">Doručená pošta ...</div>
<div class="a" style="left:246px;top:742px;width:135px;height:23px;border-radius:3px;background:linear-gradient(#4A90F8 0,#3D82F2 3px,#3B80F0 100%);border:1px solid;border-color:#5FA0FA #2C62D6 #2C62D6 #5A9AF8"></div>
<div class="a" style="left:255px;top:745px"><svg width="16" height="16"><ellipse cx="8" cy="8" rx="7" ry="7.5" fill="#E0101A"/><ellipse cx="8.3" cy="8" rx="2.6" ry="5.3" fill="#3A7EF0"/><path d="M3 4Q5 1 8 .8" stroke="#FF6060" stroke-width="1" fill="none"/></svg></div>
<div class="t" style="left:275px;top:747px;color:#fff">Odeslat odpově...</div>
<div class="a" style="left:383px;top:742px;width:137px;height:23px;border-radius:3px;background:linear-gradient(#4A90F8 0,#3D82F2 3px,#3B80F0 100%);border:1px solid;border-color:#5FA0FA #2C62D6 #2C62D6 #5A9AF8"></div>
<div class="a" style="left:392px;top:745px"><svg width="16" height="16"><g fill="#62D23A" stroke="#1E7A12" stroke-width=".6"><ellipse cx="8" cy="2.6" rx="1.9" ry="2.4"/><ellipse cx="12.6" cy="4.6" rx="2.2" ry="2"/><ellipse cx="13.2" cy="9.6" rx="2.2" ry="2"/><ellipse cx="10.2" cy="13.2" rx="1.9" ry="2.3"/><ellipse cx="5.8" cy="13.2" rx="1.9" ry="2.3"/><ellipse cx="3.2" cy="4.6" rx="2.2" ry="2"/></g><ellipse cx="2.8" cy="9.6" rx="2.3" ry="2" fill="#E02424" stroke="#801010" stroke-width=".6"/><circle cx="8" cy="8" r="2.6" fill="#F4EE4A" stroke="#7A7A10" stroke-width=".5"/></svg></div>
<div class="t" style="left:412px;top:747px;color:#fff">ICQ</div>
<div class="a" style="left:521px;top:742px;width:137px;height:23px;border-radius:3px;background:linear-gradient(#4A90F8 0,#3D82F2 3px,#3B80F0 100%);border:1px solid;border-color:#5FA0FA #2C62D6 #2C62D6 #5A9AF8"></div>
<div class="a" style="left:530px;top:745px"><svg width="16" height="16"><path d="M1.5 5.5l3-2h10v10h-13z" fill="#F7D63A" stroke="#9A7A10" stroke-width=".9"/><path d="M2 7.5h12" stroke="#FFF2A8"/><path d="M4 3.5l1-2h4l1 2" fill="#F7E070" stroke="#9A7A10" stroke-width=".8"/></svg></div>
<div class="t" style="left:550px;top:747px;color:#fff">lubingr</div>
<div class="a" style="left:659px;top:742px;width:137px;height:23px;border-radius:2px;background:linear-gradient(#1A44A8,#1E4FBE 4px,#1E50C0 100%);border:1px solid;border-color:#163C9C #2A64D8 #2A64D8 #163C9C"></div>
<div class="a" style="left:668px;top:745px"><svg width="16" height="16" shape-rendering="crispEdges"><rect x="1" y="0" width="14" height="10" fill="#9C9C94"/><rect x="2" y="1" width="12" height="8" fill="#EEEEEA"/><rect x="14" y="1" width="1" height="9" fill="#000"/><rect x="2" y="8" width="12" height="1" fill="#C4C4BC"/><rect x="4" y="3" width="8" height="5" fill="#1C1CC8"/><rect x="6" y="4" width="4" height="2" fill="#3A3AE0"/><rect x="0" y="10" width="16" height="6" fill="#000"/><rect x="1" y="11" width="14" height="4" fill="#E6E6DE"/><rect x="1" y="14" width="14" height="1" fill="#B4B4AC"/><rect x="7" y="12" width="5" height="1" fill="#222"/></svg></div>
<div class="t" style="left:688px;top:747px;color:#fff">Správa počítače</div>
<div class="t" style="left:806px;top:747px;color:#fff">CS</div>
<div class="a" style="left:841px;top:738px;width:183px;height:30px;background:linear-gradient(#0C59B9 0,#0C59B9 1px,#22A6F5 1px,#14A0F0 3px,#0F95EC 8px,#0D8DE6 24px,#0B82DC 28px,#0A6FC8 30px)"></div>
<div class="a" style="left:841px;top:738px;width:1px;height:30px;background:#0A3C98"></div>
<div class="a" style="left:842px;top:739px;width:1px;height:29px;background:#38C4FA"></div>
<div class="a" style="left:852px;top:745px"><svg width="16" height="16"><defs><radialGradient id="tg1" cx=".35" cy=".3" r=".8"><stop offset="0" stop-color="#B8F070"/><stop offset=".6" stop-color="#6CC020"/><stop offset="1" stop-color="#4A9A10"/></radialGradient></defs><path d="M3 1Q8 0 13 2Q16 8 12 15Q6 15 3 12Q0 7 3 1Z" fill="url(#tg1)"/><path d="M4.5 8l3 2.8 4.5-5.3" stroke="#fff" stroke-width="2.2" fill="none"/></svg></div>
<div class="a" style="left:869px;top:745px"><svg width="16" height="16"><rect x="7" y="1" width="7" height="7" fill="#9AD0F8" stroke="#2A5AA8" stroke-width=".8"/><rect x="2" y="5" width="7" height="7" fill="#B8E0FA" stroke="#2A5AA8" stroke-width=".8"/><rect x="1" y="12.5" width="6" height="2.5" rx="1" fill="#F0E0E8"/><rect x="8" y="9" width="5" height="2" fill="#E0D0E0"/><rect x="13" y="2" width="1.5" height="7" fill="#1A3A78"/></svg></div>
<div class="a" style="left:888px;top:745px"><svg width="16" height="16"><g fill="#58C828" stroke="#2A8A10" stroke-width=".5"><ellipse cx="8" cy="2.8" rx="2" ry="2.6"/><ellipse cx="12.8" cy="5.2" rx="2.5" ry="2.1"/><ellipse cx="12.4" cy="10.6" rx="2.4" ry="2.2"/><ellipse cx="8" cy="13.2" rx="2" ry="2.6"/><ellipse cx="3.6" cy="10.6" rx="2.4" ry="2.2"/><ellipse cx="3.2" cy="5.2" rx="2.5" ry="2.1"/></g><circle cx="8" cy="8" r="3" fill="#7ADA3A"/><path d="M8 5v6M5.5 6.5l5 3M10.5 6.5l-5 3" stroke="#E8F870" stroke-width="1"/></svg></div>
<div class="a" style="left:907px;top:745px"><svg width="16" height="16"><rect x="0" y="1" width="16" height="14" rx="3" fill="#1E7A4A"/><circle cx="8" cy="8" r="6.3" fill="#FFFFFF"/><circle cx="8" cy="8" r="4.5" fill="#2AA02A"/><circle cx="8" cy="8" r="2.8" fill="#7ACC3A"/><circle cx="8" cy="8" r="1.4" fill="#0A3A0A"/></svg></div>
<div class="a" style="left:925px;top:745px"><svg width="16" height="16"><circle cx="7" cy="7" r="5.6" fill="#7A7072" stroke="#2A3A6A" stroke-width=".8"/><circle cx="5.5" cy="6" r="2.5" fill="#D8D0D8"/><circle cx="8.5" cy="9" r="3" fill="#B0A8B8" opacity=".6"/><path d="M9 14l3-3M11 15l3-3" stroke="#B8D8F8" stroke-width="1"/></svg></div>
<div class="a" style="left:942px;top:745px"><svg width="16" height="16"><rect x="6" y="0" width="4" height="2" fill="#C8B030" stroke="#333" stroke-width=".5"/><ellipse cx="8" cy="9" rx="7.2" ry="6.3" fill="#C8B430" stroke="#202010" stroke-width="1"/><ellipse cx="8" cy="9" rx="5" ry="3.6" fill="#F8E8F0"/><ellipse cx="8" cy="9" rx="1" ry="2.6" fill="#101010"/></svg></div>
<div class="a" style="left:960px;top:745px"><svg width="17" height="17"><rect width="17" height="17" fill="#0A1480"/><circle cx="8.5" cy="8.5" r="2" fill="#F8F040"/><path d="M5.5 4.5L3.5 8.5L5.5 12.5M11.5 4.5L13.5 8.5L11.5 12.5M3.5 2L1 8.5L3.5 15M13.5 2L16 8.5L13.5 15" stroke="#F0E8A0" stroke-width="1" fill="none"/></svg></div>
<div class="t" style="left:984px;top:747px;color:#fff">17:50</div>
</body></html>
